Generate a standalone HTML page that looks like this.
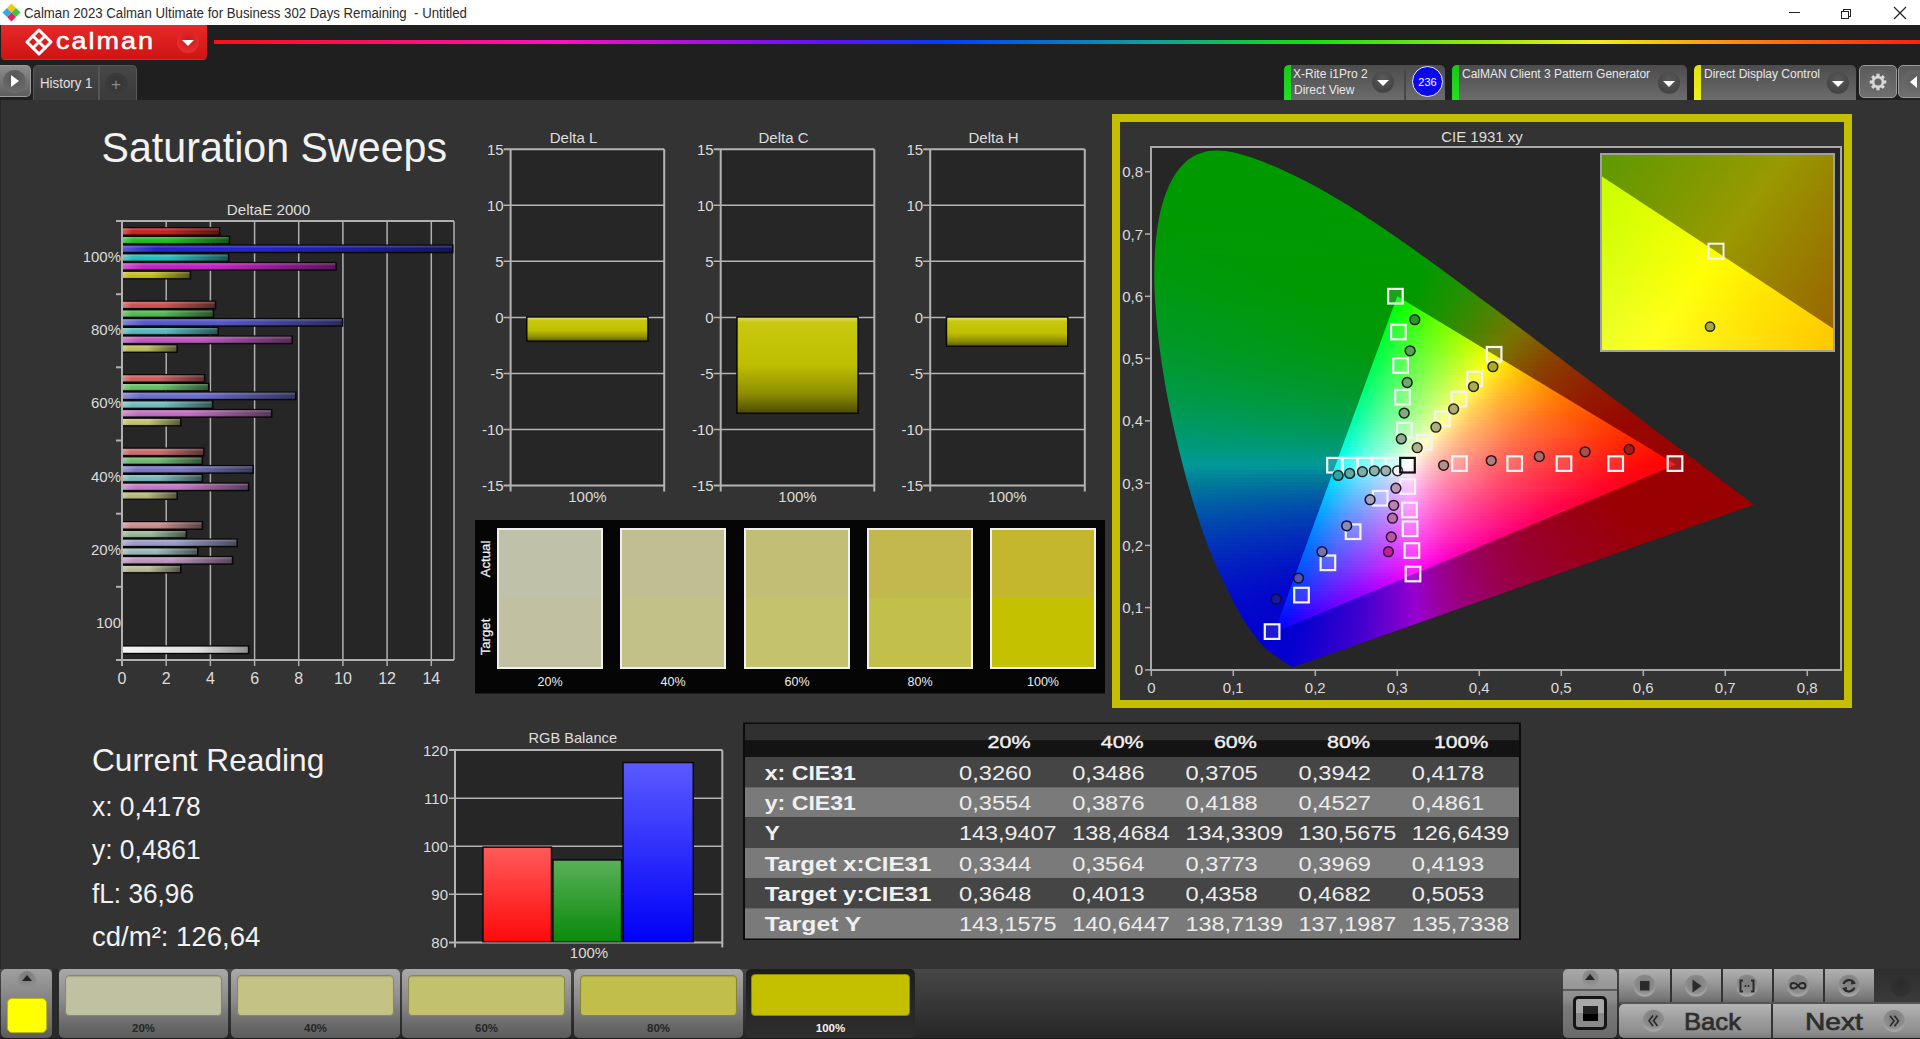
<!DOCTYPE html>
<html><head><meta charset="utf-8">
<style>
*{box-sizing:border-box}
html,body{margin:0;padding:0}
body{width:1920px;height:1039px;overflow:hidden;position:relative;background:#333333;font-family:"Liberation Sans",sans-serif;color:#e6e6e6}
.a{position:absolute}
.nw{white-space:nowrap}
#titlebar{left:0;top:0;width:1920px;height:25px;background:#fff;color:#2b2b2b;font-size:14px}
#hdr{left:0;top:25px;width:1920px;height:75px;background:#1f1f1f}
.dev{top:65px;height:35px;border-radius:5px 5px 0 0;background:linear-gradient(#4c4c4c,#6c6c6c);overflow:hidden;font-size:12px;color:#e8e8e8}
.dev .st{left:0;top:0;width:7px;height:35px;border-radius:4px 0 0 0}
.dd{width:22px;height:22px;border-radius:50%;background:radial-gradient(circle at 50% 35%,#5a5a5a,#444 70%,#555)}
.dd:after{content:"";position:absolute;left:5px;top:9px;border-left:6px solid transparent;border-right:6px solid transparent;border-top:6px solid #fff}
</style></head><body>
<div id="titlebar" class="a">
  <svg class="a" style="left:1px;top:2px" width="22" height="22" viewBox="0 0 22 22">
    <polygon points="10.5,1.5 15,6 10.5,10.5 6,6" fill="#f3c419"/>
    <polygon points="15,6 19.5,10.5 15,15 10.5,10.5" fill="#3fc43a"/>
    <polygon points="10.5,10.5 15,15 10.5,19.5 6,15" fill="#e0245a"/>
    <polygon points="6,6 10.5,10.5 6,15 1.5,10.5" fill="#35a8e0"/>
  </svg>
  <div class="a nw" style="left:23.5px;top:5px;transform:scaleX(0.944);transform-origin:0 0">Calman 2023 Calman Ultimate for Business 302 Days Remaining&nbsp; - Untitled</div>
  <div class="a" style="left:1789px;top:12px;width:11px;height:1px;background:#222"></div>
  <div class="a" style="left:1843px;top:9px;width:8px;height:8px;border:1px solid #222;background:#fff"></div>
  <div class="a" style="left:1841px;top:11px;width:8px;height:8px;border:1px solid #222;background:#fff"></div>
  <svg class="a" style="left:1893px;top:6px" width="14" height="14"><path d="M1,1L13,13M13,1L1,13" stroke="#222" stroke-width="1.2"/></svg>
</div>
<div id="hdr" class="a">
  <div class="a" style="left:1px;top:0;width:206px;height:34px;border-radius:0 0 4px 4px;background:linear-gradient(#e62a2a,#d81c1c 60%,#d01414);box-shadow:0 1px 0 #a04040"></div>
  <svg class="a" style="left:24px;top:2px" width="30" height="30" viewBox="0 0 30 30">
    <g fill="none" stroke="#fff" stroke-width="3" stroke-linejoin="round" stroke-linecap="round">
      <path d="M15,3 L27,15 L15,27 L3,15 Z"/>
      <path d="M9,9 L21,21 M21,9 L9,21"/>
    </g>
  </svg>
  <div class="a nw" style="left:56px;top:-1px;font-size:27px;color:#fff;letter-spacing:2px;-webkit-text-stroke:0.6px #fff;transform:scaleY(0.9);transform-origin:0 100%">calman</div>
  <div class="a" style="left:177px;top:6px;width:22px;height:22px;border-radius:50%;background:radial-gradient(circle at 50% 40%,#d01818,#e83030 80%,#c82020)"></div>
  <div class="a" style="left:182px;top:15px;border-left:6px solid transparent;border-right:6px solid transparent;border-top:6px solid #fff"></div>
  <div class="a" style="left:214px;top:15px;width:1706px;height:4px;background:linear-gradient(90deg,#ff1010 0%,#ff10c0 20%,#6010ff 36%,#0040ff 43%,#10a0a0 55%,#10e010 64%,#f0f010 81%,#ff8010 90%,#ff2010 100%)"></div>
  <!-- play btn -->
  <div class="a" style="left:0;top:40px;width:31px;height:32px;border-radius:0 5px 5px 0;background:linear-gradient(#8c8c8c,#5e5e5e);border:1px solid #9a9a9a;border-left:none"></div>
  <div class="a" style="left:3px;top:45px;width:23px;height:23px;border-radius:50%;background:radial-gradient(circle at 50% 30%,#555,#6a6a6a 75%,#808080)"></div>
  <div class="a" style="left:11px;top:50px;border-top:6px solid transparent;border-bottom:6px solid transparent;border-left:8px solid #fff"></div>
  <!-- history tab -->
  <div class="a" style="left:33px;top:40px;width:104px;height:35px;border-radius:5px 5px 0 0;background:linear-gradient(#474747,#3a3a3a);border:1px solid #585858;border-bottom:none"></div>
  <div class="a" style="left:98px;top:41px;width:2px;height:34px;background:#555"></div>
  <div class="a nw" style="left:40px;top:50px;font-size:14px;color:#e0e0e0;transform:scaleX(0.95);transform-origin:0 0">History 1</div>
  <div class="a" style="left:105px;top:48px;width:23px;height:23px;border-radius:50%;background:radial-gradient(circle at 50% 40%,#353535,#3c3c3c 70%,#444)"></div>
  <div class="a nw" style="left:111px;top:50px;font-size:17px;color:#888">+</div>
  <!-- devices -->
  <div class="a dev" style="left:1284px;top:40px;width:161px">
    <div class="a st" style="background:linear-gradient(#18c818,#22e022)"></div>
    <div class="a nw" style="left:9px;top:2px">X-Rite i1Pro 2</div>
    <div class="a nw" style="left:10px;top:18px">Direct View</div>
    <div class="a dd" style="left:88px;top:6px"></div>
    <div class="a" style="left:120px;top:4px;width:2px;height:31px;background:#474747"></div>
  </div>
  <div class="a" style="left:1412px;top:41px;width:31px;height:31px;border-radius:50%;background:#0a0ae8;border:1.5px solid #e8e8ff"></div>
  <div class="a nw" style="left:1412px;top:51px;width:31px;text-align:center;font-size:11px;color:#fff">236</div>
  <div class="a dev" style="left:1452px;top:40px;width:235px">
    <div class="a st" style="background:linear-gradient(#18c818,#22e022)"></div>
    <div class="a nw" style="left:10px;top:2px">CalMAN Client 3 Pattern Generator</div>
    <div class="a dd" style="left:206px;top:7px"></div>
  </div>
  <div class="a dev" style="left:1694px;top:40px;width:162px">
    <div class="a st" style="background:linear-gradient(#e0e010,#f0f020)"></div>
    <div class="a nw" style="left:10px;top:2px">Direct Display Control</div>
    <div class="a dd" style="left:133px;top:7px"></div>
  </div>
  <div class="a" style="left:1859px;top:40px;width:38px;height:33px;border-radius:5px;background:linear-gradient(#5a5a5a,#707070);border:1px solid #9a9a9a"></div>
  <div class="a" style="left:1866px;top:45px;width:24px;height:24px;border-radius:50%;background:radial-gradient(circle at 50% 35%,#5c5c5c,#6a6a6a 70%,#7a7a7a)"></div>
  <svg class="a" style="left:1868px;top:47px" width="20" height="20" viewBox="0 0 20 20">
    <g transform="translate(10,10)" fill="#d8d8d8">
      <circle r="6.2"/>
      <rect x="-1.6" y="-8.3" width="3.2" height="16.6"/>
      <rect x="-1.6" y="-8.3" width="3.2" height="16.6" transform="rotate(45)"/>
      <rect x="-1.6" y="-8.3" width="3.2" height="16.6" transform="rotate(90)"/>
      <rect x="-1.6" y="-8.3" width="3.2" height="16.6" transform="rotate(135)"/>
      <circle r="3.6" fill="#646464"/>
    </g>
  </svg>
  <div class="a" style="left:1898px;top:40px;width:30px;height:33px;border-radius:5px;background:linear-gradient(#5a5a5a,#707070);border:1px solid #9a9a9a"></div>
  <div class="a" style="left:1903px;top:45px;width:24px;height:24px;border-radius:50%;background:radial-gradient(circle at 50% 35%,#5c5c5c,#6a6a6a 70%,#7a7a7a)"></div>
  <div class="a" style="left:1910px;top:51px;border-top:6px solid transparent;border-bottom:6px solid transparent;border-right:7px solid #fff"></div>
</div>
<svg class="a" style="left:0;top:0" width="1920" height="1039" viewBox="0 0 1920 1039" font-family="Liberation Sans, sans-serif">
<defs>
<linearGradient id="bg1" x1="0" y1="0" x2="1" y2="0"><stop offset="0" stop-color="#da5656"/><stop offset="0.1" stop-color="#cd1e1e"/><stop offset="0.45" stop-color="#cd1e1e"/><stop offset="1" stop-color="#5c0e0e"/></linearGradient>
<linearGradient id="bg2" x1="0" y1="0" x2="1" y2="0"><stop offset="0" stop-color="#56ce56"/><stop offset="0.1" stop-color="#1ebe1e"/><stop offset="0.45" stop-color="#1ebe1e"/><stop offset="1" stop-color="#0e560e"/></linearGradient>
<linearGradient id="bg3" x1="0" y1="0" x2="1" y2="0"><stop offset="0" stop-color="#5656d6"/><stop offset="0.1" stop-color="#1e1ec8"/><stop offset="0.45" stop-color="#1e1ec8"/><stop offset="1" stop-color="#0e0e5a"/></linearGradient>
<linearGradient id="bg4" x1="0" y1="0" x2="1" y2="0"><stop offset="0" stop-color="#56cece"/><stop offset="0.1" stop-color="#1ebebe"/><stop offset="0.45" stop-color="#1ebebe"/><stop offset="1" stop-color="#0e5656"/></linearGradient>
<linearGradient id="bg5" x1="0" y1="0" x2="1" y2="0"><stop offset="0" stop-color="#d256d2"/><stop offset="0.1" stop-color="#c31ec3"/><stop offset="0.45" stop-color="#c31ec3"/><stop offset="1" stop-color="#580e58"/></linearGradient>
<linearGradient id="bg6" x1="0" y1="0" x2="1" y2="0"><stop offset="0" stop-color="#d2ce56"/><stop offset="0.1" stop-color="#c3be1e"/><stop offset="0.45" stop-color="#c3be1e"/><stop offset="1" stop-color="#58560e"/></linearGradient>
<linearGradient id="bg7" x1="0" y1="0" x2="1" y2="0"><stop offset="0" stop-color="#da7c7c"/><stop offset="0.1" stop-color="#cd5050"/><stop offset="0.45" stop-color="#cd5050"/><stop offset="1" stop-color="#5c2424"/></linearGradient>
<linearGradient id="bg8" x1="0" y1="0" x2="1" y2="0"><stop offset="0" stop-color="#7cca7c"/><stop offset="0.1" stop-color="#50b950"/><stop offset="0.45" stop-color="#50b950"/><stop offset="1" stop-color="#245324"/></linearGradient>
<linearGradient id="bg9" x1="0" y1="0" x2="1" y2="0"><stop offset="0" stop-color="#8080d6"/><stop offset="0.1" stop-color="#5555c8"/><stop offset="0.45" stop-color="#5555c8"/><stop offset="1" stop-color="#26265a"/></linearGradient>
<linearGradient id="bg10" x1="0" y1="0" x2="1" y2="0"><stop offset="0" stop-color="#80caca"/><stop offset="0.1" stop-color="#55b9b9"/><stop offset="0.45" stop-color="#55b9b9"/><stop offset="1" stop-color="#265353"/></linearGradient>
<linearGradient id="bg11" x1="0" y1="0" x2="1" y2="0"><stop offset="0" stop-color="#ce80ce"/><stop offset="0.1" stop-color="#be55be"/><stop offset="0.45" stop-color="#be55be"/><stop offset="1" stop-color="#562656"/></linearGradient>
<linearGradient id="bg12" x1="0" y1="0" x2="1" y2="0"><stop offset="0" stop-color="#cece83"/><stop offset="0.1" stop-color="#bebe5a"/><stop offset="0.45" stop-color="#bebe5a"/><stop offset="1" stop-color="#565628"/></linearGradient>
<linearGradient id="bg13" x1="0" y1="0" x2="1" y2="0"><stop offset="0" stop-color="#da8787"/><stop offset="0.1" stop-color="#cd5f5f"/><stop offset="0.45" stop-color="#cd5f5f"/><stop offset="1" stop-color="#5c2b2b"/></linearGradient>
<linearGradient id="bg14" x1="0" y1="0" x2="1" y2="0"><stop offset="0" stop-color="#8bce8b"/><stop offset="0.1" stop-color="#64be64"/><stop offset="0.45" stop-color="#64be64"/><stop offset="1" stop-color="#2d562d"/></linearGradient>
<linearGradient id="bg15" x1="0" y1="0" x2="1" y2="0"><stop offset="0" stop-color="#8e8eda"/><stop offset="0.1" stop-color="#6969cd"/><stop offset="0.45" stop-color="#6969cd"/><stop offset="1" stop-color="#2f2f5c"/></linearGradient>
<linearGradient id="bg16" x1="0" y1="0" x2="1" y2="0"><stop offset="0" stop-color="#92cece"/><stop offset="0.1" stop-color="#6ebebe"/><stop offset="0.45" stop-color="#6ebebe"/><stop offset="1" stop-color="#325656"/></linearGradient>
<linearGradient id="bg17" x1="0" y1="0" x2="1" y2="0"><stop offset="0" stop-color="#d292d2"/><stop offset="0.1" stop-color="#c36ec3"/><stop offset="0.45" stop-color="#c36ec3"/><stop offset="1" stop-color="#583258"/></linearGradient>
<linearGradient id="bg18" x1="0" y1="0" x2="1" y2="0"><stop offset="0" stop-color="#d2d292"/><stop offset="0.1" stop-color="#c3c36e"/><stop offset="0.45" stop-color="#c3c36e"/><stop offset="1" stop-color="#585832"/></linearGradient>
<linearGradient id="bg19" x1="0" y1="0" x2="1" y2="0"><stop offset="0" stop-color="#da8e8e"/><stop offset="0.1" stop-color="#cd6969"/><stop offset="0.45" stop-color="#cd6969"/><stop offset="1" stop-color="#5c2f2f"/></linearGradient>
<linearGradient id="bg20" x1="0" y1="0" x2="1" y2="0"><stop offset="0" stop-color="#92ca92"/><stop offset="0.1" stop-color="#6eb96e"/><stop offset="0.45" stop-color="#6eb96e"/><stop offset="1" stop-color="#325332"/></linearGradient>
<linearGradient id="bg21" x1="0" y1="0" x2="1" y2="0"><stop offset="0" stop-color="#9a9ad6"/><stop offset="0.1" stop-color="#7878c8"/><stop offset="0.45" stop-color="#7878c8"/><stop offset="1" stop-color="#36365a"/></linearGradient>
<linearGradient id="bg22" x1="0" y1="0" x2="1" y2="0"><stop offset="0" stop-color="#9acaca"/><stop offset="0.1" stop-color="#78b9b9"/><stop offset="0.45" stop-color="#78b9b9"/><stop offset="1" stop-color="#365353"/></linearGradient>
<linearGradient id="bg23" x1="0" y1="0" x2="1" y2="0"><stop offset="0" stop-color="#d29ad2"/><stop offset="0.1" stop-color="#c378c3"/><stop offset="0.45" stop-color="#c378c3"/><stop offset="1" stop-color="#583658"/></linearGradient>
<linearGradient id="bg24" x1="0" y1="0" x2="1" y2="0"><stop offset="0" stop-color="#caca9a"/><stop offset="0.1" stop-color="#b9b978"/><stop offset="0.45" stop-color="#b9b978"/><stop offset="1" stop-color="#535336"/></linearGradient>
<linearGradient id="bg25" x1="0" y1="0" x2="1" y2="0"><stop offset="0" stop-color="#daa9a9"/><stop offset="0.1" stop-color="#cd8c8c"/><stop offset="0.45" stop-color="#cd8c8c"/><stop offset="1" stop-color="#5c3f3f"/></linearGradient>
<linearGradient id="bg26" x1="0" y1="0" x2="1" y2="0"><stop offset="0" stop-color="#b0cab0"/><stop offset="0.1" stop-color="#96b996"/><stop offset="0.45" stop-color="#96b996"/><stop offset="1" stop-color="#445344"/></linearGradient>
<linearGradient id="bg27" x1="0" y1="0" x2="1" y2="0"><stop offset="0" stop-color="#b4b4d6"/><stop offset="0.1" stop-color="#9b9bc8"/><stop offset="0.45" stop-color="#9b9bc8"/><stop offset="1" stop-color="#46465a"/></linearGradient>
<linearGradient id="bg28" x1="0" y1="0" x2="1" y2="0"><stop offset="0" stop-color="#b4caca"/><stop offset="0.1" stop-color="#9bb9b9"/><stop offset="0.45" stop-color="#9bb9b9"/><stop offset="1" stop-color="#465353"/></linearGradient>
<linearGradient id="bg29" x1="0" y1="0" x2="1" y2="0"><stop offset="0" stop-color="#ceb0ce"/><stop offset="0.1" stop-color="#be96be"/><stop offset="0.45" stop-color="#be96be"/><stop offset="1" stop-color="#564456"/></linearGradient>
<linearGradient id="bg30" x1="0" y1="0" x2="1" y2="0"><stop offset="0" stop-color="#cacab0"/><stop offset="0.1" stop-color="#b9b996"/><stop offset="0.45" stop-color="#b9b996"/><stop offset="1" stop-color="#535344"/></linearGradient>
<linearGradient id="bgw" x1="0" y1="0" x2="1" y2="0"><stop offset="0" stop-color="#f4f4f4"/><stop offset="0.6" stop-color="#e0e0e0"/><stop offset="1" stop-color="#909090"/></linearGradient>
<linearGradient id="shine" x1="0" y1="0" x2="0" y2="1"><stop offset="0" stop-color="#fff" stop-opacity="0.25"/><stop offset="0.5" stop-color="#fff" stop-opacity="0"/><stop offset="1" stop-color="#000" stop-opacity="0.15"/></linearGradient>
<linearGradient id="ybar" x1="0" y1="0" x2="0" y2="1"><stop offset="0" stop-color="#e4e480"/><stop offset="0.12" stop-color="#c8c810"/><stop offset="0.55" stop-color="#c0c000"/><stop offset="0.85" stop-color="#8c8c00"/><stop offset="1" stop-color="#606000"/></linearGradient>
<linearGradient id="ybarC" x1="0" y1="0" x2="0" y2="1"><stop offset="0" stop-color="#d8d870"/><stop offset="0.05" stop-color="#c8c810"/><stop offset="0.5" stop-color="#bebe00"/><stop offset="0.8" stop-color="#8e8e00"/><stop offset="1" stop-color="#4e4e00"/></linearGradient>
<linearGradient id="rbar" x1="0" y1="0" x2="0" y2="1"><stop offset="0" stop-color="#ff5a5a"/><stop offset="1" stop-color="#ff0a0a"/></linearGradient>
<linearGradient id="gbar" x1="0" y1="0" x2="0" y2="1"><stop offset="0" stop-color="#58b058"/><stop offset="1" stop-color="#0a8a0a"/></linearGradient>
<linearGradient id="bbar" x1="0" y1="0" x2="0" y2="1"><stop offset="0" stop-color="#5a5aff"/><stop offset="1" stop-color="#0000f8"/></linearGradient>
</defs>
<text x="101.5" y="161.5" font-size="42.5" fill="#f2f2f2" text-anchor="start" textLength="345.5" lengthAdjust="spacingAndGlyphs" >Saturation Sweeps</text>
<rect x="122" y="221" width="332" height="439" fill="#262626"/>
<line x1="166.2" y1="221" x2="166.2" y2="666" stroke="#b0b0b0" stroke-width="1.5"/>
<line x1="210.4" y1="221" x2="210.4" y2="666" stroke="#b0b0b0" stroke-width="1.5"/>
<line x1="254.6" y1="221" x2="254.6" y2="666" stroke="#b0b0b0" stroke-width="1.5"/>
<line x1="298.7" y1="221" x2="298.7" y2="666" stroke="#b0b0b0" stroke-width="1.5"/>
<line x1="342.9" y1="221" x2="342.9" y2="666" stroke="#b0b0b0" stroke-width="1.5"/>
<line x1="387.1" y1="221" x2="387.1" y2="666" stroke="#b0b0b0" stroke-width="1.5"/>
<line x1="431.3" y1="221" x2="431.3" y2="666" stroke="#b0b0b0" stroke-width="1.5"/>
<line x1="122" y1="666" x2="122" y2="221" stroke="#b0b0b0" stroke-width="2"/>
<line x1="116" y1="221" x2="454" y2="221" stroke="#b0b0b0" stroke-width="2"/>
<line x1="454" y1="221" x2="454" y2="660" stroke="#b0b0b0" stroke-width="1.5"/>
<line x1="116" y1="660" x2="454" y2="660" stroke="#b0b0b0" stroke-width="2"/>
<line x1="116" y1="294.2" x2="122" y2="294.2" stroke="#b0b0b0" stroke-width="2"/>
<line x1="116" y1="367.3" x2="122" y2="367.3" stroke="#b0b0b0" stroke-width="2"/>
<line x1="116" y1="440.5" x2="122" y2="440.5" stroke="#b0b0b0" stroke-width="2"/>
<line x1="116" y1="513.7" x2="122" y2="513.7" stroke="#b0b0b0" stroke-width="2"/>
<line x1="116" y1="586.8" x2="122" y2="586.8" stroke="#b0b0b0" stroke-width="2"/>
<text x="268.5" y="215.3" font-size="15" fill="#dedede" text-anchor="middle" textLength="83.5" lengthAdjust="spacingAndGlyphs" >DeltaE 2000</text>
<text x="121.0" y="262.1" font-size="15" fill="#dcdcdc" text-anchor="end" >100%</text>
<text x="121.0" y="335.3" font-size="15" fill="#dcdcdc" text-anchor="end" >80%</text>
<text x="121.0" y="408.4" font-size="15" fill="#dcdcdc" text-anchor="end" >60%</text>
<text x="121.0" y="481.6" font-size="15" fill="#dcdcdc" text-anchor="end" >40%</text>
<text x="121.0" y="554.8" font-size="15" fill="#dcdcdc" text-anchor="end" >20%</text>
<text x="121.0" y="627.9" font-size="15" fill="#dcdcdc" text-anchor="end" >100</text>
<text x="122.0" y="684.0" font-size="16" fill="#dcdcdc" text-anchor="middle" >0</text>
<text x="166.2" y="684.0" font-size="16" fill="#dcdcdc" text-anchor="middle" >2</text>
<text x="210.4" y="684.0" font-size="16" fill="#dcdcdc" text-anchor="middle" >4</text>
<text x="254.6" y="684.0" font-size="16" fill="#dcdcdc" text-anchor="middle" >6</text>
<text x="298.7" y="684.0" font-size="16" fill="#dcdcdc" text-anchor="middle" >8</text>
<text x="342.9" y="684.0" font-size="16" fill="#dcdcdc" text-anchor="middle" >10</text>
<text x="387.1" y="684.0" font-size="16" fill="#dcdcdc" text-anchor="middle" >12</text>
<text x="431.3" y="684.0" font-size="16" fill="#dcdcdc" text-anchor="middle" >14</text>
<rect x="123" y="227.0" width="97.5" height="8.9" fill="#080808"/>
<rect x="123" y="228.3" width="95.9" height="6.2" fill="url(#bg1)"/>
<rect x="123" y="228.3" width="95.9" height="6.2" fill="url(#shine)"/>
<rect x="123" y="235.7" width="107.3" height="8.9" fill="#080808"/>
<rect x="123" y="237.0" width="105.7" height="6.2" fill="url(#bg2)"/>
<rect x="123" y="237.0" width="105.7" height="6.2" fill="url(#shine)"/>
<rect x="123" y="244.4" width="330.5" height="8.9" fill="#080808"/>
<rect x="123" y="245.7" width="328.9" height="6.2" fill="url(#bg3)"/>
<rect x="123" y="245.7" width="328.9" height="6.2" fill="url(#shine)"/>
<rect x="123" y="253.2" width="106.4" height="8.9" fill="#080808"/>
<rect x="123" y="254.5" width="104.8" height="6.2" fill="url(#bg4)"/>
<rect x="123" y="254.5" width="104.8" height="6.2" fill="url(#shine)"/>
<rect x="123" y="261.9" width="213.9" height="8.9" fill="#080808"/>
<rect x="123" y="263.2" width="212.3" height="6.2" fill="url(#bg5)"/>
<rect x="123" y="263.2" width="212.3" height="6.2" fill="url(#shine)"/>
<rect x="123" y="270.6" width="68.2" height="8.9" fill="#080808"/>
<rect x="123" y="271.9" width="66.6" height="6.2" fill="url(#bg6)"/>
<rect x="123" y="271.9" width="66.6" height="6.2" fill="url(#shine)"/>
<rect x="123" y="300.5" width="93.3" height="8.9" fill="#080808"/>
<rect x="123" y="301.8" width="91.7" height="6.2" fill="url(#bg7)"/>
<rect x="123" y="301.8" width="91.7" height="6.2" fill="url(#shine)"/>
<rect x="123" y="309.2" width="91.3" height="8.9" fill="#080808"/>
<rect x="123" y="310.5" width="89.7" height="6.2" fill="url(#bg8)"/>
<rect x="123" y="310.5" width="89.7" height="6.2" fill="url(#shine)"/>
<rect x="123" y="317.9" width="220.3" height="8.9" fill="#080808"/>
<rect x="123" y="319.2" width="218.7" height="6.2" fill="url(#bg9)"/>
<rect x="123" y="319.2" width="218.7" height="6.2" fill="url(#shine)"/>
<rect x="123" y="326.7" width="96.0" height="8.9" fill="#080808"/>
<rect x="123" y="328.0" width="94.4" height="6.2" fill="url(#bg10)"/>
<rect x="123" y="328.0" width="94.4" height="6.2" fill="url(#shine)"/>
<rect x="123" y="335.4" width="170.0" height="8.9" fill="#080808"/>
<rect x="123" y="336.7" width="168.4" height="6.2" fill="url(#bg11)"/>
<rect x="123" y="336.7" width="168.4" height="6.2" fill="url(#shine)"/>
<rect x="123" y="344.1" width="55.0" height="8.9" fill="#080808"/>
<rect x="123" y="345.4" width="53.4" height="6.2" fill="url(#bg12)"/>
<rect x="123" y="345.4" width="53.4" height="6.2" fill="url(#shine)"/>
<rect x="123" y="374.0" width="82.4" height="8.9" fill="#080808"/>
<rect x="123" y="375.3" width="80.8" height="6.2" fill="url(#bg13)"/>
<rect x="123" y="375.3" width="80.8" height="6.2" fill="url(#shine)"/>
<rect x="123" y="382.7" width="86.5" height="8.9" fill="#080808"/>
<rect x="123" y="384.0" width="84.9" height="6.2" fill="url(#bg14)"/>
<rect x="123" y="384.0" width="84.9" height="6.2" fill="url(#shine)"/>
<rect x="123" y="391.4" width="173.6" height="8.9" fill="#080808"/>
<rect x="123" y="392.7" width="172.0" height="6.2" fill="url(#bg15)"/>
<rect x="123" y="392.7" width="172.0" height="6.2" fill="url(#shine)"/>
<rect x="123" y="400.2" width="90.4" height="8.9" fill="#080808"/>
<rect x="123" y="401.5" width="88.8" height="6.2" fill="url(#bg16)"/>
<rect x="123" y="401.5" width="88.8" height="6.2" fill="url(#shine)"/>
<rect x="123" y="408.9" width="149.5" height="8.9" fill="#080808"/>
<rect x="123" y="410.2" width="147.9" height="6.2" fill="url(#bg17)"/>
<rect x="123" y="410.2" width="147.9" height="6.2" fill="url(#shine)"/>
<rect x="123" y="417.6" width="58.6" height="8.9" fill="#080808"/>
<rect x="123" y="418.9" width="57.0" height="6.2" fill="url(#bg18)"/>
<rect x="123" y="418.9" width="57.0" height="6.2" fill="url(#shine)"/>
<rect x="123" y="447.5" width="81.7" height="8.9" fill="#080808"/>
<rect x="123" y="448.8" width="80.1" height="6.2" fill="url(#bg19)"/>
<rect x="123" y="448.8" width="80.1" height="6.2" fill="url(#shine)"/>
<rect x="123" y="456.2" width="80.2" height="8.9" fill="#080808"/>
<rect x="123" y="457.5" width="78.6" height="6.2" fill="url(#bg20)"/>
<rect x="123" y="457.5" width="78.6" height="6.2" fill="url(#shine)"/>
<rect x="123" y="464.9" width="131.0" height="8.9" fill="#080808"/>
<rect x="123" y="466.2" width="129.4" height="6.2" fill="url(#bg21)"/>
<rect x="123" y="466.2" width="129.4" height="6.2" fill="url(#shine)"/>
<rect x="123" y="473.7" width="80.2" height="8.9" fill="#080808"/>
<rect x="123" y="475.0" width="78.6" height="6.2" fill="url(#bg22)"/>
<rect x="123" y="475.0" width="78.6" height="6.2" fill="url(#shine)"/>
<rect x="123" y="482.4" width="126.4" height="8.9" fill="#080808"/>
<rect x="123" y="483.7" width="124.8" height="6.2" fill="url(#bg23)"/>
<rect x="123" y="483.7" width="124.8" height="6.2" fill="url(#shine)"/>
<rect x="123" y="491.1" width="55.0" height="8.9" fill="#080808"/>
<rect x="123" y="492.4" width="53.4" height="6.2" fill="url(#bg24)"/>
<rect x="123" y="492.4" width="53.4" height="6.2" fill="url(#shine)"/>
<rect x="123" y="521.0" width="80.2" height="8.9" fill="#080808"/>
<rect x="123" y="522.3" width="78.6" height="6.2" fill="url(#bg25)"/>
<rect x="123" y="522.3" width="78.6" height="6.2" fill="url(#shine)"/>
<rect x="123" y="529.7" width="64.2" height="8.9" fill="#080808"/>
<rect x="123" y="531.0" width="62.6" height="6.2" fill="url(#bg26)"/>
<rect x="123" y="531.0" width="62.6" height="6.2" fill="url(#shine)"/>
<rect x="123" y="538.4" width="115.0" height="8.9" fill="#080808"/>
<rect x="123" y="539.7" width="113.4" height="6.2" fill="url(#bg27)"/>
<rect x="123" y="539.7" width="113.4" height="6.2" fill="url(#shine)"/>
<rect x="123" y="547.2" width="75.6" height="8.9" fill="#080808"/>
<rect x="123" y="548.5" width="74.0" height="6.2" fill="url(#bg28)"/>
<rect x="123" y="548.5" width="74.0" height="6.2" fill="url(#shine)"/>
<rect x="123" y="555.9" width="110.4" height="8.9" fill="#080808"/>
<rect x="123" y="557.2" width="108.8" height="6.2" fill="url(#bg29)"/>
<rect x="123" y="557.2" width="108.8" height="6.2" fill="url(#shine)"/>
<rect x="123" y="564.6" width="58.6" height="8.9" fill="#080808"/>
<rect x="123" y="565.9" width="57.0" height="6.2" fill="url(#bg30)"/>
<rect x="123" y="565.9" width="57.0" height="6.2" fill="url(#shine)"/>
<rect x="123" y="645.3" width="126.4" height="8.9" fill="#080808"/>
<rect x="123" y="646.6" width="124.8" height="6.2" fill="url(#bgw)"/>
<rect x="510.6" y="149.3" width="153.60000000000002" height="336.09999999999997" fill="#262626"/>
<line x1="503.6" y1="149.3" x2="664.2" y2="149.3" stroke="#b4b4b4" stroke-width="2"/>
<text x="503.6" y="154.8" font-size="15" fill="#dcdcdc" text-anchor="end" >15</text>
<line x1="503.6" y1="205.3" x2="664.2" y2="205.3" stroke="#b4b4b4" stroke-width="1.5"/>
<text x="503.6" y="210.8" font-size="15" fill="#dcdcdc" text-anchor="end" >10</text>
<line x1="503.6" y1="261.3" x2="664.2" y2="261.3" stroke="#b4b4b4" stroke-width="1.5"/>
<text x="503.6" y="266.8" font-size="15" fill="#dcdcdc" text-anchor="end" >5</text>
<line x1="503.6" y1="317.4" x2="664.2" y2="317.4" stroke="#b4b4b4" stroke-width="1.5"/>
<text x="503.6" y="322.9" font-size="15" fill="#dcdcdc" text-anchor="end" >0</text>
<line x1="503.6" y1="373.4" x2="664.2" y2="373.4" stroke="#b4b4b4" stroke-width="1.5"/>
<text x="503.6" y="378.9" font-size="15" fill="#dcdcdc" text-anchor="end" >-5</text>
<line x1="503.6" y1="429.4" x2="664.2" y2="429.4" stroke="#b4b4b4" stroke-width="1.5"/>
<text x="503.6" y="434.9" font-size="15" fill="#dcdcdc" text-anchor="end" >-10</text>
<line x1="503.6" y1="485.4" x2="664.2" y2="485.4" stroke="#b4b4b4" stroke-width="2"/>
<text x="503.6" y="490.9" font-size="15" fill="#dcdcdc" text-anchor="end" >-15</text>
<line x1="510.6" y1="149.3" x2="510.6" y2="491.4" stroke="#b4b4b4" stroke-width="2"/>
<line x1="664.2" y1="149.3" x2="664.2" y2="491.4" stroke="#b4b4b4" stroke-width="2"/>
<text x="573.5" y="143.2" font-size="15" fill="#dedede" text-anchor="middle" >Delta L</text>
<text x="587.4" y="502.0" font-size="15" fill="#dcdcdc" text-anchor="middle" >100%</text>
<rect x="526.0" y="316.2" width="122.70000000000005" height="25.8" fill="#080808"/>
<rect x="527.5" y="317.7" width="119.70000000000005" height="22.8" fill="url(#ybar)"/>
<rect x="720.7" y="149.3" width="153.5999999999999" height="336.09999999999997" fill="#262626"/>
<line x1="713.7" y1="149.3" x2="874.3" y2="149.3" stroke="#b4b4b4" stroke-width="2"/>
<text x="713.7" y="154.8" font-size="15" fill="#dcdcdc" text-anchor="end" >15</text>
<line x1="713.7" y1="205.3" x2="874.3" y2="205.3" stroke="#b4b4b4" stroke-width="1.5"/>
<text x="713.7" y="210.8" font-size="15" fill="#dcdcdc" text-anchor="end" >10</text>
<line x1="713.7" y1="261.3" x2="874.3" y2="261.3" stroke="#b4b4b4" stroke-width="1.5"/>
<text x="713.7" y="266.8" font-size="15" fill="#dcdcdc" text-anchor="end" >5</text>
<line x1="713.7" y1="317.4" x2="874.3" y2="317.4" stroke="#b4b4b4" stroke-width="1.5"/>
<text x="713.7" y="322.9" font-size="15" fill="#dcdcdc" text-anchor="end" >0</text>
<line x1="713.7" y1="373.4" x2="874.3" y2="373.4" stroke="#b4b4b4" stroke-width="1.5"/>
<text x="713.7" y="378.9" font-size="15" fill="#dcdcdc" text-anchor="end" >-5</text>
<line x1="713.7" y1="429.4" x2="874.3" y2="429.4" stroke="#b4b4b4" stroke-width="1.5"/>
<text x="713.7" y="434.9" font-size="15" fill="#dcdcdc" text-anchor="end" >-10</text>
<line x1="713.7" y1="485.4" x2="874.3" y2="485.4" stroke="#b4b4b4" stroke-width="2"/>
<text x="713.7" y="490.9" font-size="15" fill="#dcdcdc" text-anchor="end" >-15</text>
<line x1="720.7" y1="149.3" x2="720.7" y2="491.4" stroke="#b4b4b4" stroke-width="2"/>
<line x1="874.3" y1="149.3" x2="874.3" y2="491.4" stroke="#b4b4b4" stroke-width="2"/>
<text x="783.5" y="143.2" font-size="15" fill="#dedede" text-anchor="middle" >Delta C</text>
<text x="797.5" y="502.0" font-size="15" fill="#dcdcdc" text-anchor="middle" >100%</text>
<rect x="736.2" y="316.2" width="122.59999999999991" height="97.8" fill="#080808"/>
<rect x="737.7" y="317.7" width="119.59999999999991" height="94.8" fill="url(#ybarC)"/>
<rect x="930.2" y="149.3" width="154.5999999999999" height="336.09999999999997" fill="#262626"/>
<line x1="923.2" y1="149.3" x2="1084.8" y2="149.3" stroke="#b4b4b4" stroke-width="2"/>
<text x="923.2" y="154.8" font-size="15" fill="#dcdcdc" text-anchor="end" >15</text>
<line x1="923.2" y1="205.3" x2="1084.8" y2="205.3" stroke="#b4b4b4" stroke-width="1.5"/>
<text x="923.2" y="210.8" font-size="15" fill="#dcdcdc" text-anchor="end" >10</text>
<line x1="923.2" y1="261.3" x2="1084.8" y2="261.3" stroke="#b4b4b4" stroke-width="1.5"/>
<text x="923.2" y="266.8" font-size="15" fill="#dcdcdc" text-anchor="end" >5</text>
<line x1="923.2" y1="317.4" x2="1084.8" y2="317.4" stroke="#b4b4b4" stroke-width="1.5"/>
<text x="923.2" y="322.9" font-size="15" fill="#dcdcdc" text-anchor="end" >0</text>
<line x1="923.2" y1="373.4" x2="1084.8" y2="373.4" stroke="#b4b4b4" stroke-width="1.5"/>
<text x="923.2" y="378.9" font-size="15" fill="#dcdcdc" text-anchor="end" >-5</text>
<line x1="923.2" y1="429.4" x2="1084.8" y2="429.4" stroke="#b4b4b4" stroke-width="1.5"/>
<text x="923.2" y="434.9" font-size="15" fill="#dcdcdc" text-anchor="end" >-10</text>
<line x1="923.2" y1="485.4" x2="1084.8" y2="485.4" stroke="#b4b4b4" stroke-width="2"/>
<text x="923.2" y="490.9" font-size="15" fill="#dcdcdc" text-anchor="end" >-15</text>
<line x1="930.2" y1="149.3" x2="930.2" y2="491.4" stroke="#b4b4b4" stroke-width="2"/>
<line x1="1084.8" y1="149.3" x2="1084.8" y2="491.4" stroke="#b4b4b4" stroke-width="2"/>
<text x="993.5" y="143.2" font-size="15" fill="#dedede" text-anchor="middle" >Delta H</text>
<text x="1007.5" y="502.0" font-size="15" fill="#dcdcdc" text-anchor="middle" >100%</text>
<rect x="945.7" y="316.2" width="122.79999999999995" height="30.8" fill="#080808"/>
<rect x="947.2" y="317.7" width="119.79999999999995" height="27.8" fill="url(#ybar)"/>
<rect x="475" y="520" width="630" height="173.5" fill="#050505"/>
<rect x="497" y="528" width="106" height="141" fill="#f0f0f0"/>
<rect x="499" y="530" width="102" height="68" fill="#bfc2a8"/>
<rect x="499" y="598" width="102" height="69" fill="#c1c1a1"/>
<text x="550.0" y="686.0" font-size="12.5" fill="#f0f0f0" text-anchor="middle" >20%</text>
<rect x="620" y="528" width="106" height="141" fill="#f0f0f0"/>
<rect x="622" y="530" width="102" height="68" fill="#c0bf91"/>
<rect x="622" y="598" width="102" height="69" fill="#c2c187"/>
<text x="673.0" y="686.0" font-size="12.5" fill="#f0f0f0" text-anchor="middle" >40%</text>
<rect x="744" y="528" width="106" height="141" fill="#f0f0f0"/>
<rect x="746" y="530" width="102" height="68" fill="#c2be76"/>
<rect x="746" y="598" width="102" height="69" fill="#c4c26c"/>
<text x="797.0" y="686.0" font-size="12.5" fill="#f0f0f0" text-anchor="middle" >60%</text>
<rect x="867" y="528" width="106" height="141" fill="#f0f0f0"/>
<rect x="869" y="530" width="102" height="68" fill="#c2b84e"/>
<rect x="869" y="598" width="102" height="69" fill="#c2c04a"/>
<text x="920.0" y="686.0" font-size="12.5" fill="#f0f0f0" text-anchor="middle" >80%</text>
<rect x="990" y="528" width="106" height="141" fill="#f0f0f0"/>
<rect x="992" y="530" width="102" height="68" fill="#c4b72d"/>
<rect x="992" y="598" width="102" height="69" fill="#c4c200"/>
<text x="1043.0" y="686.0" font-size="12.5" fill="#f0f0f0" text-anchor="middle" >100%</text>
<text transform="translate(489.8,559) rotate(-90)" font-size="13.2" fill="#f0f0f0" text-anchor="middle" stroke="#f0f0f0" stroke-width="0.25">Actual</text>
<text transform="translate(489.8,637) rotate(-90)" font-size="13.2" fill="#f0f0f0" text-anchor="middle" stroke="#f0f0f0" stroke-width="0.25">Target</text>
<text x="92.0" y="771.0" font-size="30.5" fill="#f2f2f2" text-anchor="start" textLength="232.3" lengthAdjust="spacingAndGlyphs" >Current Reading</text>
<text x="92.0" y="816.0" font-size="27" fill="#f2f2f2" text-anchor="start" textLength="108.6" lengthAdjust="spacingAndGlyphs" >x: 0,4178</text>
<text x="92.0" y="859.3" font-size="27" fill="#f2f2f2" text-anchor="start" textLength="108.6" lengthAdjust="spacingAndGlyphs" >y: 0,4861</text>
<text x="92.0" y="902.5" font-size="27" fill="#f2f2f2" text-anchor="start" textLength="102.0" lengthAdjust="spacingAndGlyphs" >fL: 36,96</text>
<text x="92.0" y="946.0" font-size="27" fill="#f2f2f2" text-anchor="start" textLength="168.3" lengthAdjust="spacingAndGlyphs" >cd/m²: 126,64</text>
<rect x="455" y="750.1" width="267.29999999999995" height="192.29999999999995" fill="#262626"/>
<line x1="449" y1="750.1" x2="722.3" y2="750.1" stroke="#b4b4b4" stroke-width="2"/>
<text x="448.0" y="755.6" font-size="15" fill="#dcdcdc" text-anchor="end" >120</text>
<line x1="449" y1="798.2" x2="722.3" y2="798.2" stroke="#b4b4b4" stroke-width="1.5"/>
<text x="448.0" y="803.7" font-size="15" fill="#dcdcdc" text-anchor="end" >110</text>
<line x1="449" y1="846.2" x2="722.3" y2="846.2" stroke="#b4b4b4" stroke-width="1.5"/>
<text x="448.0" y="851.8" font-size="15" fill="#dcdcdc" text-anchor="end" >100</text>
<line x1="449" y1="894.3" x2="722.3" y2="894.3" stroke="#b4b4b4" stroke-width="1.5"/>
<text x="448.0" y="899.8" font-size="15" fill="#dcdcdc" text-anchor="end" >90</text>
<line x1="449" y1="942.4" x2="722.3" y2="942.4" stroke="#b4b4b4" stroke-width="2"/>
<text x="448.0" y="947.9" font-size="15" fill="#dcdcdc" text-anchor="end" >80</text>
<line x1="455" y1="750.1" x2="455" y2="947.4" stroke="#b4b4b4" stroke-width="2"/>
<line x1="722.3" y1="750.1" x2="722.3" y2="947.4" stroke="#b4b4b4" stroke-width="2"/>
<text x="572.8" y="743.0" font-size="15" fill="#dedede" text-anchor="middle" textLength="88.5" lengthAdjust="spacingAndGlyphs" >RGB Balance</text>
<text x="589.0" y="958.0" font-size="15" fill="#dcdcdc" text-anchor="middle" >100%</text>
<rect x="482.2" y="846.4" width="70.0" height="96.0" fill="#0a0a0a"/>
<rect x="483.7" y="847.9" width="67.0" height="93.5" fill="url(#rbar)"/>
<rect x="552.2" y="859.2" width="70.1" height="83.2" fill="#0a0a0a"/>
<rect x="553.7" y="860.7" width="67.1" height="80.7" fill="url(#gbar)"/>
<rect x="622.3" y="761.8" width="71.7" height="180.6" fill="#0a0a0a"/>
<rect x="623.8" y="763.3" width="68.7" height="178.1" fill="url(#bbar)"/>
<rect x="743" y="722.5" width="778" height="217.5" fill="#0c0c0c"/>
<rect x="745" y="724" width="774" height="16.5" fill="#303030"/>
<rect x="745" y="740.5" width="774" height="16.5" fill="#131313"/>
<rect x="745" y="757.0" width="774" height="30.25" fill="#454545"/>
<text x="764.7" y="779.7" font-size="19.5" fill="#f0f0f0" text-anchor="start" font-weight="bold" textLength="91.3" lengthAdjust="spacingAndGlyphs" >x: CIE31</text>
<text x="959.0" y="779.7" font-size="19.5" fill="#ececec" text-anchor="start" textLength="72.4" lengthAdjust="spacingAndGlyphs" >0,3260</text>
<text x="1072.2" y="779.7" font-size="19.5" fill="#ececec" text-anchor="start" textLength="72.4" lengthAdjust="spacingAndGlyphs" >0,3486</text>
<text x="1185.4" y="779.7" font-size="19.5" fill="#ececec" text-anchor="start" textLength="72.4" lengthAdjust="spacingAndGlyphs" >0,3705</text>
<text x="1298.6" y="779.7" font-size="19.5" fill="#ececec" text-anchor="start" textLength="72.4" lengthAdjust="spacingAndGlyphs" >0,3942</text>
<text x="1411.8" y="779.7" font-size="19.5" fill="#ececec" text-anchor="start" textLength="72.4" lengthAdjust="spacingAndGlyphs" >0,4178</text>
<rect x="745" y="787.2" width="774" height="30.25" fill="#7a7a7a"/>
<text x="764.7" y="810.0" font-size="19.5" fill="#f0f0f0" text-anchor="start" font-weight="bold" textLength="91.3" lengthAdjust="spacingAndGlyphs" >y: CIE31</text>
<text x="959.0" y="810.0" font-size="19.5" fill="#ececec" text-anchor="start" textLength="72.4" lengthAdjust="spacingAndGlyphs" >0,3554</text>
<text x="1072.2" y="810.0" font-size="19.5" fill="#ececec" text-anchor="start" textLength="72.4" lengthAdjust="spacingAndGlyphs" >0,3876</text>
<text x="1185.4" y="810.0" font-size="19.5" fill="#ececec" text-anchor="start" textLength="72.4" lengthAdjust="spacingAndGlyphs" >0,4188</text>
<text x="1298.6" y="810.0" font-size="19.5" fill="#ececec" text-anchor="start" textLength="72.4" lengthAdjust="spacingAndGlyphs" >0,4527</text>
<text x="1411.8" y="810.0" font-size="19.5" fill="#ececec" text-anchor="start" textLength="72.4" lengthAdjust="spacingAndGlyphs" >0,4861</text>
<rect x="745" y="817.5" width="774" height="30.25" fill="#454545"/>
<text x="764.7" y="840.2" font-size="19.5" fill="#f0f0f0" text-anchor="start" font-weight="bold" textLength="15.0" lengthAdjust="spacingAndGlyphs" >Y</text>
<text x="959.0" y="840.2" font-size="19.5" fill="#ececec" text-anchor="start" textLength="97.6" lengthAdjust="spacingAndGlyphs" >143,9407</text>
<text x="1072.2" y="840.2" font-size="19.5" fill="#ececec" text-anchor="start" textLength="97.6" lengthAdjust="spacingAndGlyphs" >138,4684</text>
<text x="1185.4" y="840.2" font-size="19.5" fill="#ececec" text-anchor="start" textLength="97.6" lengthAdjust="spacingAndGlyphs" >134,3309</text>
<text x="1298.6" y="840.2" font-size="19.5" fill="#ececec" text-anchor="start" textLength="97.6" lengthAdjust="spacingAndGlyphs" >130,5675</text>
<text x="1411.8" y="840.2" font-size="19.5" fill="#ececec" text-anchor="start" textLength="97.6" lengthAdjust="spacingAndGlyphs" >126,6439</text>
<rect x="745" y="847.8" width="774" height="30.25" fill="#7a7a7a"/>
<text x="764.7" y="870.5" font-size="19.5" fill="#f0f0f0" text-anchor="start" font-weight="bold" textLength="166.6" lengthAdjust="spacingAndGlyphs" >Target x:CIE31</text>
<text x="959.0" y="870.5" font-size="19.5" fill="#ececec" text-anchor="start" textLength="72.4" lengthAdjust="spacingAndGlyphs" >0,3344</text>
<text x="1072.2" y="870.5" font-size="19.5" fill="#ececec" text-anchor="start" textLength="72.4" lengthAdjust="spacingAndGlyphs" >0,3564</text>
<text x="1185.4" y="870.5" font-size="19.5" fill="#ececec" text-anchor="start" textLength="72.4" lengthAdjust="spacingAndGlyphs" >0,3773</text>
<text x="1298.6" y="870.5" font-size="19.5" fill="#ececec" text-anchor="start" textLength="72.4" lengthAdjust="spacingAndGlyphs" >0,3969</text>
<text x="1411.8" y="870.5" font-size="19.5" fill="#ececec" text-anchor="start" textLength="72.4" lengthAdjust="spacingAndGlyphs" >0,4193</text>
<rect x="745" y="878.0" width="774" height="30.25" fill="#454545"/>
<text x="764.7" y="900.7" font-size="19.5" fill="#f0f0f0" text-anchor="start" font-weight="bold" textLength="166.6" lengthAdjust="spacingAndGlyphs" >Target y:CIE31</text>
<text x="959.0" y="900.7" font-size="19.5" fill="#ececec" text-anchor="start" textLength="72.4" lengthAdjust="spacingAndGlyphs" >0,3648</text>
<text x="1072.2" y="900.7" font-size="19.5" fill="#ececec" text-anchor="start" textLength="72.4" lengthAdjust="spacingAndGlyphs" >0,4013</text>
<text x="1185.4" y="900.7" font-size="19.5" fill="#ececec" text-anchor="start" textLength="72.4" lengthAdjust="spacingAndGlyphs" >0,4358</text>
<text x="1298.6" y="900.7" font-size="19.5" fill="#ececec" text-anchor="start" textLength="72.4" lengthAdjust="spacingAndGlyphs" >0,4682</text>
<text x="1411.8" y="900.7" font-size="19.5" fill="#ececec" text-anchor="start" textLength="72.4" lengthAdjust="spacingAndGlyphs" >0,5053</text>
<rect x="745" y="908.2" width="774" height="30.25" fill="#7a7a7a"/>
<text x="764.7" y="931.0" font-size="19.5" fill="#f0f0f0" text-anchor="start" font-weight="bold" textLength="96.7" lengthAdjust="spacingAndGlyphs" >Target Y</text>
<text x="959.0" y="931.0" font-size="19.5" fill="#ececec" text-anchor="start" textLength="97.6" lengthAdjust="spacingAndGlyphs" >143,1575</text>
<text x="1072.2" y="931.0" font-size="19.5" fill="#ececec" text-anchor="start" textLength="97.6" lengthAdjust="spacingAndGlyphs" >140,6447</text>
<text x="1185.4" y="931.0" font-size="19.5" fill="#ececec" text-anchor="start" textLength="97.6" lengthAdjust="spacingAndGlyphs" >138,7139</text>
<text x="1298.6" y="931.0" font-size="19.5" fill="#ececec" text-anchor="start" textLength="97.6" lengthAdjust="spacingAndGlyphs" >137,1987</text>
<text x="1411.8" y="931.0" font-size="19.5" fill="#ececec" text-anchor="start" textLength="97.6" lengthAdjust="spacingAndGlyphs" >135,7338</text>
<text x="1030.5" y="748.0" font-size="17" fill="#f0f0f0" text-anchor="end" textLength="43.0" lengthAdjust="spacingAndGlyphs" stroke="#f0f0f0" stroke-width="0.35">20%</text>
<text x="1143.7" y="748.0" font-size="17" fill="#f0f0f0" text-anchor="end" textLength="43.0" lengthAdjust="spacingAndGlyphs" stroke="#f0f0f0" stroke-width="0.35">40%</text>
<text x="1256.9" y="748.0" font-size="17" fill="#f0f0f0" text-anchor="end" textLength="43.0" lengthAdjust="spacingAndGlyphs" stroke="#f0f0f0" stroke-width="0.35">60%</text>
<text x="1370.1" y="748.0" font-size="17" fill="#f0f0f0" text-anchor="end" textLength="43.0" lengthAdjust="spacingAndGlyphs" stroke="#f0f0f0" stroke-width="0.35">80%</text>
<text x="1488.3" y="748.0" font-size="17" fill="#f0f0f0" text-anchor="end" textLength="54.3" lengthAdjust="spacingAndGlyphs" stroke="#f0f0f0" stroke-width="0.35">100%</text>
<rect x="1112" y="114" width="740" height="594" fill="#c4c000"/>
<rect x="1120" y="122" width="724" height="578" fill="#333333"/>
<rect x="1151" y="147" width="690" height="523" fill="#262626"/>
</svg>
<div class="a" style="left:0;top:0;width:1920px;height:1039px;clip-path:path('M1294.1 666.8 L1293.8 666.9 L1293.4 666.9 L1292.8 666.9 L1291.8 666.7 L1289.8 665.6 L1286.1 663.1 L1279.7 658.9 L1269.4 651.4 L1266.7 649.2 L1263.8 646.4 L1260.6 643.1 L1257.0 639.0 L1253.1 633.9 L1248.6 627.7 L1243.8 620.2 L1238.5 611.1 L1232.6 600.2 L1226.2 587.3 L1224.4 583.7 L1222.7 580.0 L1220.9 576.2 L1219.0 572.2 L1217.2 568.0 L1215.3 563.7 L1213.4 559.3 L1211.5 554.7 L1209.6 549.9 L1207.6 544.9 L1205.7 539.8 L1203.8 534.5 L1201.9 529.1 L1200.0 523.4 L1198.1 517.6 L1196.1 511.7 L1194.2 505.6 L1192.3 499.3 L1190.4 492.8 L1188.5 486.2 L1186.6 479.4 L1184.7 472.5 L1182.9 465.4 L1181.0 458.2 L1179.2 450.9 L1177.4 443.5 L1175.6 435.9 L1173.9 428.3 L1172.2 420.7 L1170.6 412.9 L1169.0 405.1 L1167.5 397.3 L1166.0 389.4 L1164.7 381.5 L1163.4 373.7 L1162.1 365.8 L1161.0 357.9 L1159.9 350.1 L1158.9 342.4 L1158.0 334.6 L1157.2 327.0 L1156.5 319.4 L1155.9 311.9 L1155.4 304.5 L1154.9 297.2 L1154.6 290.0 L1154.4 282.8 L1154.3 275.8 L1154.4 268.9 L1154.5 262.2 L1154.8 255.5 L1155.1 249.0 L1155.6 242.6 L1156.3 236.4 L1157.0 230.3 L1157.9 224.4 L1158.9 218.7 L1160.0 213.2 L1161.3 207.9 L1162.7 202.8 L1164.2 197.8 L1165.9 193.2 L1167.7 188.7 L1169.6 184.5 L1171.6 180.5 L1173.7 176.7 L1175.9 173.2 L1178.3 170.0 L1180.7 167.0 L1183.2 164.3 L1185.8 161.8 L1188.5 159.6 L1191.2 157.7 L1194.1 156.0 L1197.0 154.6 L1199.9 153.4 L1202.9 152.4 L1206.0 151.6 L1209.1 151.1 L1212.2 150.7 L1215.4 150.5 L1218.6 150.5 L1221.8 150.7 L1225.1 151.0 L1228.3 151.5 L1231.6 152.0 L1234.9 152.7 L1238.3 153.5 L1241.6 154.4 L1244.9 155.4 L1248.3 156.5 L1251.6 157.6 L1255.0 158.7 L1258.3 160.0 L1261.7 161.2 L1265.0 162.5 L1268.3 163.9 L1271.6 165.2 L1274.9 166.6 L1278.2 168.1 L1281.4 169.5 L1284.6 171.0 L1287.8 172.4 L1290.9 173.9 L1294.1 175.4 L1297.2 176.9 L1300.3 178.5 L1303.4 180.0 L1306.4 181.6 L1309.5 183.2 L1312.5 184.8 L1315.6 186.4 L1318.6 188.1 L1321.6 189.8 L1324.6 191.5 L1327.6 193.2 L1330.6 194.9 L1333.6 196.7 L1336.6 198.4 L1339.6 200.2 L1342.6 202.0 L1345.5 203.8 L1348.5 205.6 L1351.5 207.5 L1354.5 209.4 L1357.4 211.2 L1360.4 213.1 L1363.3 215.0 L1366.3 216.9 L1369.3 218.9 L1372.2 220.8 L1375.1 222.8 L1378.1 224.7 L1381.0 226.7 L1384.0 228.7 L1386.9 230.7 L1389.8 232.7 L1392.8 234.7 L1395.7 236.8 L1398.6 238.8 L1401.5 240.9 L1404.5 242.9 L1407.4 245.0 L1410.3 247.0 L1413.2 249.1 L1416.2 251.2 L1419.1 253.3 L1422.0 255.4 L1425.0 257.5 L1427.9 259.6 L1430.8 261.7 L1433.8 263.8 L1436.7 266.0 L1439.6 268.1 L1442.6 270.3 L1445.5 272.4 L1448.4 274.5 L1451.4 276.7 L1454.3 278.9 L1457.2 281.0 L1468.9 289.7 L1480.6 298.4 L1492.3 307.1 L1503.9 315.8 L1515.5 324.5 L1526.9 333.1 L1538.3 341.7 L1549.5 350.2 L1560.6 358.6 L1571.5 366.9 L1582.3 375.0 L1592.8 383.0 L1603.2 390.8 L1613.2 398.4 L1623.0 405.8 L1632.4 412.9 L1641.4 419.7 L1649.9 426.2 L1657.8 432.2 L1665.4 437.9 L1697.3 461.9 L1718.3 477.9 L1731.8 488.1 L1740.9 495.0 L1746.6 499.3 L1749.9 501.8 L1751.7 503.2 L1752.7 503.9 L1753.2 504.3 L1753.8 504.7 Z')">
<div class="a" style="left:1151px;top:146px;width:609px;height:4px;background:linear-gradient(90deg,#009900 0px,#029900 326px,#249100 390px,#787700 510px,#884300 608px)"></div>
<div class="a" style="left:1151px;top:150px;width:609px;height:4px;background:linear-gradient(90deg,#009900 0px,#029900 324px,#249100 388px,#777700 506px,#894200 608px)"></div>
<div class="a" style="left:1151px;top:154px;width:609px;height:4px;background:linear-gradient(90deg,#009900 0px,#029900 322px,#259000 386px,#777800 502px,#894000 608px)"></div>
<div class="a" style="left:1151px;top:158px;width:609px;height:4px;background:linear-gradient(90deg,#009900 0px,#029900 320px,#239100 382px,#777700 500px,#8a3f00 608px)"></div>
<div class="a" style="left:1151px;top:162px;width:609px;height:4px;background:linear-gradient(90deg,#009900 0px,#029900 318px,#239100 380px,#777700 496px,#8a3d00 608px)"></div>
<div class="a" style="left:1151px;top:166px;width:609px;height:4px;background:linear-gradient(90deg,#009900 0px,#029900 318px,#259000 380px,#787700 494px,#835600 548px,#8b3c00 608px)"></div>
<div class="a" style="left:1151px;top:170px;width:609px;height:4px;background:linear-gradient(90deg,#009900 0px,#029900 316px,#259000 378px,#777700 490px,#835500 546px,#8b3a00 608px)"></div>
<div class="a" style="left:1151px;top:174px;width:609px;height:4px;background:linear-gradient(90deg,#009900 0px,#029900 314px,#249100 374px,#787700 488px,#845400 544px,#8b3900 608px)"></div>
<div class="a" style="left:1151px;top:178px;width:609px;height:4px;background:linear-gradient(90deg,#009900 0px,#029900 312px,#249100 372px,#777700 484px,#845300 542px,#8c3700 608px)"></div>
<div class="a" style="left:1151px;top:182px;width:609px;height:4px;background:linear-gradient(90deg,#009900 0px,#029900 310px,#249100 370px,#777800 480px,#845200 540px,#8c3600 608px)"></div>
<div class="a" style="left:1151px;top:186px;width:609px;height:4px;background:linear-gradient(90deg,#009900 0px,#029900 308px,#239100 366px,#787700 478px,#845100 538px,#8c3400 608px)"></div>
<div class="a" style="left:1151px;top:190px;width:609px;height:4px;background:linear-gradient(90deg,#009900 0px,#029900 306px,#239100 364px,#777700 474px,#855000 536px,#8d3300 608px)"></div>
<div class="a" style="left:1151px;top:194px;width:609px;height:4px;background:linear-gradient(90deg,#009901 0px,#019900 304px,#229100 360px,#787700 472px,#854f00 534px,#8d3100 608px)"></div>
<div class="a" style="left:1151px;top:198px;width:609px;height:4px;background:linear-gradient(90deg,#009901 0px,#029900 304px,#259000 362px,#777700 468px,#854f00 532px,#8e3000 608px)"></div>
<div class="a" style="left:1151px;top:202px;width:609px;height:4px;background:linear-gradient(90deg,#009901 0px,#029900 302px,#239100 358px,#777800 464px,#854e00 530px,#8e2f00 608px)"></div>
<div class="a" style="left:1151px;top:206px;width:609px;height:4px;background:linear-gradient(90deg,#009901 0px,#029900 300px,#249100 356px,#787700 462px,#864d00 528px,#8e2d00 608px)"></div>
<div class="a" style="left:1151px;top:210px;width:609px;height:4px;background:linear-gradient(90deg,#009902 0px,#029900 298px,#249100 354px,#777700 458px,#864c00 526px,#8f2c00 608px)"></div>
<div class="a" style="left:1151px;top:214px;width:609px;height:4px;background:linear-gradient(90deg,#009902 0px,#029900 296px,#229100 350px,#787700 456px,#874a00 526px,#8f2a00 608px)"></div>
<div class="a" style="left:1151px;top:218px;width:609px;height:4px;background:linear-gradient(90deg,#009902 0px,#019900 294px,#229100 348px,#777700 452px,#864a00 522px,#8f2900 608px)"></div>
<div class="a" style="left:1151px;top:222px;width:609px;height:4px;background:linear-gradient(90deg,#009903 0px,#019900 292px,#219100 344px,#787600 450px,#874800 522px,#902800 608px)"></div>
<div class="a" style="left:1151px;top:226px;width:609px;height:4px;background:linear-gradient(90deg,#009903 0px,#029900 292px,#249100 346px,#777700 446px,#874800 518px,#902600 608px)"></div>
<div class="a" style="left:1151px;top:230px;width:609px;height:4px;background:linear-gradient(90deg,#009904 0px,#029900 290px,#249100 344px,#777700 442px,#874700 516px,#902500 608px)"></div>
<div class="a" style="left:1151px;top:234px;width:609px;height:4px;background:linear-gradient(90deg,#009905 0px,#029900 288px,#239100 340px,#787700 440px,#884600 514px,#912400 608px)"></div>
<div class="a" style="left:1151px;top:238px;width:609px;height:4px;background:linear-gradient(90deg,#009906 0px,#019900 286px,#239100 338px,#777700 436px,#884500 512px,#912300 608px)"></div>
<div class="a" style="left:1151px;top:242px;width:609px;height:4px;background:linear-gradient(90deg,#009907 0px,#019900 284px,#229100 334px,#787600 434px,#884400 510px,#912100 608px)"></div>
<div class="a" style="left:1151px;top:246px;width:609px;height:4px;background:linear-gradient(90deg,#009908 0px,#019900 282px,#229100 332px,#777700 430px,#884300 508px,#922000 608px)"></div>
<div class="a" style="left:1151px;top:250px;width:609px;height:4px;background:linear-gradient(90deg,#009909 0px,#019900 280px,#209200 328px,#787600 428px,#894200 506px,#921f00 608px)"></div>
<div class="a" style="left:1151px;top:254px;width:609px;height:4px;background:linear-gradient(90deg,#00990a 0px,#009901 108px,#029900 280px,#249100 330px,#787700 424px,#894100 504px,#921e00 608px)"></div>
<div class="a" style="left:1151px;top:258px;width:609px;height:4px;background:linear-gradient(90deg,#00990b 0px,#009901 114px,#029900 278px,#249100 328px,#777700 420px,#894000 502px,#921c00 608px)"></div>
<div class="a" style="left:1151px;top:262px;width:609px;height:4px;background:linear-gradient(90deg,#00990c 0px,#009901 118px,#019900 276px,#229100 324px,#787600 418px,#8a3f00 500px,#931b00 608px)"></div>
<div class="a" style="left:1151px;top:266px;width:609px;height:4px;background:linear-gradient(90deg,#00990d 0px,#009901 122px,#019900 274px,#239100 322px,#777700 414px,#8a3e00 498px,#931a00 608px)"></div>
<div class="a" style="left:1151px;top:270px;width:609px;height:4px;background:linear-gradient(90deg,#00990e 0px,#009902 126px,#019900 272px,#219100 318px,#787600 412px,#8a3d00 496px,#931900 608px)"></div>
<div class="a" style="left:1151px;top:274px;width:609px;height:4px;background:linear-gradient(90deg,#00990f 0px,#009902 132px,#019900 270px,#219100 316px,#787700 408px,#8a3c00 494px,#941800 608px)"></div>
<div class="a" style="left:1151px;top:278px;width:609px;height:4px;background:linear-gradient(90deg,#009911 0px,#009902 136px,#019900 268px,#219100 314px,#777700 404px,#835700 444px,#8a3c00 490px,#941700 608px)"></div>
<div class="a" style="left:1151px;top:282px;width:609px;height:4px;background:linear-gradient(90deg,#009912 0px,#009902 142px,#019900 266px,#209200 310px,#787600 402px,#835400 444px,#8b3a00 490px,#941500 608px)"></div>
<div class="a" style="left:1151px;top:286px;width:609px;height:4px;background:linear-gradient(90deg,#009913 0px,#009902 148px,#019900 266px,#239100 312px,#777700 398px,#835400 440px,#8b3a00 486px,#941400 608px)"></div>
<div class="a" style="left:1151px;top:290px;width:609px;height:4px;background:linear-gradient(90deg,#009915 0px,#009902 154px,#019900 264px,#229100 308px,#787600 396px,#845300 438px,#8b3900 484px,#951300 608px)"></div>
<div class="a" style="left:1151px;top:294px;width:609px;height:4px;background:linear-gradient(90deg,#009916 0px,#009903 160px,#019900 262px,#229100 306px,#787700 392px,#845300 434px,#8b3800 482px,#951200 608px)"></div>
<div class="a" style="left:1151px;top:298px;width:609px;height:4px;background:linear-gradient(90deg,#009917 0px,#009903 166px,#019900 260px,#209200 302px,#787600 390px,#845200 432px,#8c3700 480px,#951100 608px)"></div>
<div class="a" style="left:1151px;top:302px;width:609px;height:4px;background:linear-gradient(90deg,#009919 0px,#009903 172px,#019900 258px,#209200 300px,#787600 386px,#845100 430px,#8c3600 478px,#951000 608px)"></div>
<div class="a" style="left:1151px;top:306px;width:609px;height:4px;background:linear-gradient(90deg,#00991a 0px,#019900 256px,#219100 298px,#777700 382px,#845100 426px,#8c3600 474px,#960f00 608px)"></div>
<div class="a" style="left:1151px;top:310px;width:609px;height:4px;background:linear-gradient(90deg,#00991c 0px,#019900 254px,#1f9200 294px,#787600 380px,#855000 424px,#8d3400 474px,#960e00 608px)"></div>
<div class="a" style="left:1151px;top:314px;width:609px;height:4px;background:linear-gradient(90deg,#00991e 0px,#019900 254px,#239100 296px,#787700 376px,#855000 420px,#8d3400 470px,#960d00 608px)"></div>
<div class="a" style="left:1151px;top:318px;width:609px;height:4px;background:linear-gradient(90deg,#00991f 0px,#019900 252px,#219100 292px,#787500 374px,#854f00 418px,#8d3200 468px,#960c00 608px)"></div>
<div class="a" style="left:1151px;top:322px;width:609px;height:4px;background:linear-gradient(90deg,#009921 0px,#019901 250px,#219100 290px,#787600 370px,#854f00 414px,#8d3100 466px,#931b00 530px,#970b00 608px)"></div>
<div class="a" style="left:1151px;top:326px;width:609px;height:4px;background:linear-gradient(90deg,#009923 0px,#019901 248px,#1f9200 286px,#787500 368px,#854e00 412px,#8e3000 464px,#931a00 528px,#970a00 608px)"></div>
<div class="a" style="left:1151px;top:330px;width:609px;height:4px;background:linear-gradient(90deg,#009925 0px,#019902 246px,#1d9200 282px,#797400 366px,#864d00 410px,#8e2f00 462px,#931900 526px,#970900 608px)"></div>
<div class="a" style="left:1151px;top:334px;width:609px;height:4px;background:linear-gradient(90deg,#009926 0px,#009903 240px,#1c9300 278px,#6a7c00 348px,#7b6e00 368px,#874800 412px,#8f2c00 464px,#970800 608px)"></div>
<div class="a" style="left:1151px;top:338px;width:609px;height:4px;background:linear-gradient(90deg,#009928 0px,#009905 238px,#1a9301 274px,#6b7c00 346px,#7b6d00 366px,#874700 410px,#8f2b00 462px,#970700 608px)"></div>
<div class="a" style="left:1151px;top:342px;width:609px;height:4px;background:linear-gradient(90deg,#00992a 0px,#009907 236px,#1a9302 272px,#6f7a00 346px,#7c6b00 364px,#884600 408px,#8f2a00 460px,#941500 526px,#980600 608px)"></div>
<div class="a" style="left:1151px;top:346px;width:609px;height:4px;background:linear-gradient(90deg,#00992c 0px,#009909 234px,#059807 248px,#1a9303 270px,#737900 346px,#7c6a00 362px,#884500 406px,#8f2900 458px,#941400 524px,#980500 608px)"></div>
<div class="a" style="left:1151px;top:350px;width:609px;height:4px;background:linear-gradient(90deg,#00992f 0px,#00990b 234px,#189405 266px,#6f7a00 340px,#7c6b00 358px,#884500 402px,#902800 456px,#951300 524px,#980400 608px)"></div>
<div class="a" style="left:1151px;top:354px;width:609px;height:4px;background:linear-gradient(90deg,#009931 0px,#00990e 232px,#189407 264px,#737900 340px,#7d6900 356px,#884300 400px,#902700 454px,#951200 522px,#980400 608px)"></div>
<div class="a" style="left:1151px;top:358px;width:609px;height:4px;background:linear-gradient(90deg,#009933 0px,#009910 230px,#16940a 260px,#747800 338px,#7d6800 354px,#894200 398px,#902600 452px,#951100 522px,#980300 608px)"></div>
<div class="a" style="left:1151px;top:362px;width:609px;height:4px;background:linear-gradient(90deg,#009935 0px,#009913 228px,#16940c 258px,#767800 336px,#7e6600 352px,#894000 396px,#912400 452px,#960f00 524px,#980300 608px)"></div>
<div class="a" style="left:1151px;top:366px;width:609px;height:4px;background:linear-gradient(90deg,#009938 0px,#009916 226px,#14950f 254px,#757801 332px,#7d6700 348px,#894000 392px,#912300 448px,#960e00 522px,#990200 608px)"></div>
<div class="a" style="left:1151px;top:370px;width:609px;height:4px;background:linear-gradient(90deg,#00993a 0px,#009919 224px,#149512 252px,#767802 330px,#7e6500 346px,#8a3e00 392px,#912100 448px,#960c00 524px,#990200 608px)"></div>
<div class="a" style="left:1151px;top:374px;width:609px;height:4px;background:linear-gradient(90deg,#00993d 0px,#00991c 222px,#119516 248px,#787703 328px,#7e6401 344px,#8a3c00 390px,#922000 446px,#960b00 524px,#990100 608px)"></div>
<div class="a" style="left:1151px;top:378px;width:609px;height:4px;background:linear-gradient(90deg,#009940 0px,#00991e 222px,#119519 246px,#777805 324px,#7e6402 340px,#8a3c00 386px,#921f00 444px,#970a00 524px,#990100 608px)"></div>
<div class="a" style="left:1151px;top:382px;width:609px;height:4px;background:linear-gradient(90deg,#009943 0px,#009922 220px,#0f961d 242px,#767808 320px,#7f6303 338px,#8b3b00 384px,#921e00 442px,#970900 526px,#990100 608px)"></div>
<div class="a" style="left:1151px;top:386px;width:609px;height:4px;background:linear-gradient(90deg,#009945 0px,#009925 218px,#0f9620 240px,#77770b 318px,#7f6104 336px,#8b3900 382px,#931c00 442px,#970700 528px,#990100 608px)"></div>
<div class="a" style="left:1151px;top:390px;width:609px;height:4px;background:linear-gradient(90deg,#009948 0px,#009929 216px,#0d9624 236px,#76780e 314px,#7f6207 332px,#8b3900 378px,#931c00 438px,#980600 528px,#990000 608px)"></div>
<div class="a" style="left:1151px;top:394px;width:609px;height:4px;background:linear-gradient(90deg,#00994b 0px,#00992d 214px,#0c9628 234px,#777711 312px,#80600a 330px,#8c3600 378px,#931a00 438px,#980600 524px,#990000 608px)"></div>
<div class="a" style="left:1151px;top:398px;width:609px;height:4px;background:linear-gradient(90deg,#00994f 0px,#009931 212px,#0a972d 230px,#777815 308px,#805e0c 328px,#8c3501 376px,#931900 436px,#980500 520px,#990000 608px)"></div>
<div class="a" style="left:1151px;top:402px;width:609px;height:4px;background:linear-gradient(90deg,#009952 0px,#009935 210px,#0a9731 228px,#757819 304px,#805f10 324px,#8c3501 372px,#941800 434px,#980500 516px,#990000 608px)"></div>
<div class="a" style="left:1151px;top:406px;width:609px;height:4px;background:linear-gradient(90deg,#009955 0px,#00993a 208px,#089736 224px,#77771c 302px,#815d12 322px,#8d3302 370px,#941700 432px,#980400 512px,#990000 608px)"></div>
<div class="a" style="left:1151px;top:410px;width:609px;height:4px;background:linear-gradient(90deg,#009959 0px,#00993e 206px,#07973b 222px,#767821 298px,#815b15 320px,#8d3203 368px,#941500 432px,#980400 510px,#990000 608px)"></div>
<div class="a" style="left:1151px;top:414px;width:609px;height:4px;background:linear-gradient(90deg,#00995d 0px,#009943 206px,#079740 220px,#777725 296px,#815c1a 316px,#8d3105 364px,#941400 428px,#980400 504px,#990000 608px)"></div>
<div class="a" style="left:1151px;top:418px;width:609px;height:4px;background:linear-gradient(90deg,#009961 0px,#009948 204px,#079745 218px,#76782a 292px,#825a1d 314px,#8e3007 362px,#951300 426px,#980300 500px,#990000 608px)"></div>
<div class="a" style="left:1151px;top:422px;width:609px;height:4px;background:linear-gradient(90deg,#009965 0px,#00994e 202px,#07984b 216px,#78762e 290px,#825820 312px,#8e2e09 360px,#951100 426px,#980300 498px,#990000 608px)"></div>
<div class="a" style="left:1151px;top:426px;width:609px;height:4px;background:linear-gradient(90deg,#009969 0px,#019952 208px,#249149 236px,#777734 286px,#894118 330px,#922004 382px,#970b00 444px,#990200 502px,#990000 608px)"></div>
<div class="a" style="left:1151px;top:430px;width:609px;height:4px;background:linear-gradient(90deg,#00996d 0px,#019958 206px,#229150 232px,#787639 284px,#89411d 326px,#921d05 382px,#970a00 442px,#990000 608px)"></div>
<div class="a" style="left:1151px;top:434px;width:609px;height:4px;background:linear-gradient(90deg,#009971 0px,#01995e 204px,#229156 230px,#777740 280px,#893f20 324px,#931a06 384px,#970900 442px,#990000 608px)"></div>
<div class="a" style="left:1151px;top:438px;width:609px;height:4px;background:linear-gradient(90deg,#009976 0px,#019965 202px,#22915d 228px,#767846 276px,#893f25 320px,#941807 384px,#970800 438px,#990000 608px)"></div>
<div class="a" style="left:1151px;top:442px;width:609px;height:4px;background:linear-gradient(90deg,#00997b 0px,#01996c 200px,#1f9265 224px,#78764c 274px,#8a3d28 318px,#941608 384px,#980701 438px,#990000 608px)"></div>
<div class="a" style="left:1151px;top:446px;width:609px;height:4px;background:linear-gradient(90deg,#009980 0px,#029973 200px,#23916b 224px,#777854 270px,#8a3d2d 314px,#931c11 364px,#980601 434px,#990000 608px)"></div>
<div class="a" style="left:1151px;top:450px;width:609px;height:4px;background:linear-gradient(90deg,#009985 0px,#01997b 198px,#209274 220px,#78765b 268px,#835646 288px,#8b3b31 312px,#931b14 362px,#980501 430px,#990000 608px)"></div>
<div class="a" style="left:1151px;top:454px;width:609px;height:4px;background:linear-gradient(90deg,#00998b 0px,#019984 196px,#23917b 220px,#777763 264px,#83574e 284px,#8b3b37 308px,#921d1a 352px,#970804 412px,#990000 608px)"></div>
<div class="a" style="left:1151px;top:458px;width:609px;height:4px;background:linear-gradient(90deg,#009991 0px,#01998d 194px,#209285 216px,#76786c 260px,#835453 282px,#8b393b 306px,#931a1c 352px,#980605 414px,#990000 608px)"></div>
<div class="a" style="left:1151px;top:462px;width:609px;height:4px;background:linear-gradient(90deg,#009997 0px,#019996 192px,#20918f 214px,#787675 258px,#83555b 278px,#8b3942 302px,#93191f 350px,#980405 416px,#990000 608px)"></div>
<div class="a" style="left:1151px;top:466px;width:609px;height:4px;background:linear-gradient(90deg,#009599 0px,#029299 192px,#268990 216px,#7a707a 258px,#85505f 278px,#8c3746 300px,#94151f 352px,#980306 416px,#990000 608px)"></div>
<div class="a" style="left:1151px;top:470px;width:609px;height:4px;background:linear-gradient(90deg,#008f99 0px,#018999 190px,#277f90 216px,#7c6a7f 258px,#8c364e 296px,#941422 350px,#990207 418px,#990000 608px)"></div>
<div class="a" style="left:1151px;top:474px;width:609px;height:4px;background:linear-gradient(90deg,#008999 0px,#018099 188px,#2c7590 218px,#7e6484 258px,#8c3453 294px,#951225 348px,#990107 420px,#990000 608px)"></div>
<div class="a" style="left:1151px;top:478px;width:609px;height:4px;background:linear-gradient(90deg,#008499 0px,#027899 188px,#356b92 222px,#5e608a 244px,#815e89 258px,#8d345b 290px,#951128 346px,#990108 420px,#990000 608px)"></div>
<div class="a" style="left:1151px;top:482px;width:609px;height:4px;background:linear-gradient(90deg,#007e99 0px,#01709c 186px,#396294 224px,#5a598d 242px,#82578f 258px,#8d3463 286px,#95102d 342px,#99010b 416px,#990001 474px,#990000 608px)"></div>
<div class="a" style="left:1151px;top:486px;width:609px;height:4px;background:linear-gradient(90deg,#007999 0px,#02699f 186px,#4c5693 234px,#845193 258px,#8d3169 284px,#960f32 338px,#99010d 412px,#990002 472px,#990000 608px)"></div>
<div class="a" style="left:1151px;top:490px;width:609px;height:4px;background:linear-gradient(90deg,#00749b 0px,#0162a2 184px,#175ca0 202px,#4c4f96 234px,#854b98 258px,#8d3172 280px,#921c50 306px,#960f37 334px,#99000f 408px,#990002 472px,#990000 608px)"></div>
<div class="a" style="left:1151px;top:494px;width:609px;height:4px;background:linear-gradient(90deg,#006f9d 0px,#025ba5 184px,#494999 232px,#86459c 258px,#8e2e79 278px,#931a55 304px,#960d3a 332px,#990012 404px,#990002 472px,#990000 608px)"></div>
<div class="a" style="left:1151px;top:498px;width:609px;height:4px;background:linear-gradient(90deg,#006a9f 0px,#0255a8 182px,#43459d 228px,#873fa0 258px,#8e2e83 274px,#931a5d 300px,#960c40 328px,#990015 400px,#990003 472px,#990000 608px)"></div>
<div class="a" style="left:1151px;top:502px;width:609px;height:4px;background:linear-gradient(90deg,#0066a1 0px,#024fab 182px,#4040a0 226px,#883aa4 258px,#8e2d8e 270px,#931a67 294px,#960c47 322px,#990018 394px,#990003 470px,#990000 608px)"></div>
<div class="a" style="left:1151px;top:506px;width:609px;height:4px;background:linear-gradient(90deg,#0061a3 0px,#024aad 180px,#3a3ba3 222px,#8934a8 258px,#8f2b96 268px,#94186d 292px,#970a4b 320px,#99001a 392px,#990004 472px,#990000 608px)"></div>
<div class="a" style="left:1151px;top:510px;width:609px;height:4px;background:linear-gradient(90deg,#005da5 0px,#0244b0 178px,#3837a6 220px,#8a2fac 258px,#931879 286px,#970b56 312px,#990237 346px,#99001f 384px,#990004 470px,#990000 608px)"></div>
<div class="a" style="left:1151px;top:514px;width:609px;height:4px;background:linear-gradient(90deg,#0058a7 0px,#023fb2 178px,#3932aa 220px,#8f29b0 260px,#94167f 284px,#97095b 310px,#99013a 344px,#990022 382px,#990005 472px,#990000 608px)"></div>
<div class="a" style="left:1151px;top:518px;width:609px;height:4px;background:linear-gradient(90deg,#0054a9 0px,#023ab4 176px,#372ead 218px,#9025b4 260px,#951382 284px,#97075d 310px,#99013b 344px,#990023 382px,#990005 474px,#990000 608px)"></div>
<div class="a" style="left:1151px;top:522px;width:609px;height:4px;background:linear-gradient(90deg,#0050ab 0px,#0336b6 176px,#392ab0 218px,#9120b7 260px,#951085 284px,#98045d 312px,#99003d 344px,#990025 380px,#990005 476px,#990000 608px)"></div>
<div class="a" style="left:1151px;top:526px;width:609px;height:4px;background:linear-gradient(90deg,#004cac 0px,#0231b8 174px,#3a25b3 218px,#911bba 260px,#960d88 284px,#98035f 312px,#99003e 344px,#990026 380px,#990006 478px,#990000 608px)"></div>
<div class="a" style="left:1151px;top:530px;width:609px;height:4px;background:linear-gradient(90deg,#0049ae 0px,#032dba 174px,#3b21b6 218px,#9217bd 260px,#970988 286px,#990261 312px,#990040 344px,#990028 380px,#990006 480px,#990000 608px)"></div>
<div class="a" style="left:1151px;top:534px;width:609px;height:4px;background:linear-gradient(90deg,#0045b0 0px,#0229bc 172px,#391eb9 216px,#9213c0 260px,#98068a 286px,#990163 312px,#990043 342px,#99002a 378px,#990006 482px,#990000 608px)"></div>
<div class="a" style="left:1151px;top:538px;width:609px;height:4px;background:linear-gradient(90deg,#0041b1 0px,#0325bd 172px,#3a1abb 216px,#920fc3 260px,#980389 288px,#990064 312px,#990044 342px,#99002b 378px,#990007 484px,#990000 608px)"></div>
<div class="a" style="left:1151px;top:542px;width:609px;height:4px;background:linear-gradient(90deg,#003eb3 0px,#0322bf 170px,#3b17be 216px,#930cc6 260px,#99028b 288px,#990066 312px,#990046 342px,#99002c 378px,#990007 486px,#990000 608px)"></div>
<div class="a" style="left:1151px;top:546px;width:609px;height:4px;background:linear-gradient(90deg,#003bb4 0px,#031ec0 170px,#3c13c0 216px,#9708c8 262px,#990195 284px,#99006a 310px,#990049 340px,#99002f 376px,#990008 486px,#990000 608px)"></div>
<div class="a" style="left:1151px;top:550px;width:609px;height:4px;background:linear-gradient(90deg,#0037b6 0px,#031bc2 168px,#3d10c3 216px,#9805cb 262px,#990196 284px,#99006b 310px,#99004a 340px,#990030 376px,#990019 426px,#990008 488px,#990000 608px)"></div>
<div class="a" style="left:1151px;top:554px;width:609px;height:4px;background:linear-gradient(90deg,#0034b7 0px,#0218c3 166px,#3b0dc5 214px,#9802cd 262px,#990098 284px,#99006c 310px,#99004b 340px,#990031 376px,#99001a 426px,#990009 488px,#990000 608px)"></div>
<div class="a" style="left:1151px;top:558px;width:609px;height:4px;background:linear-gradient(90deg,#0031b9 0px,#0315c4 166px,#3c0ac7 214px,#9701ce 262px,#990095 286px,#99006e 310px,#99004d 340px,#990032 376px,#99000a 486px,#990000 608px)"></div>
<div class="a" style="left:1151px;top:562px;width:609px;height:4px;background:linear-gradient(90deg,#002eba 0px,#0312c6 164px,#3a08c9 212px,#9700ce 262px,#990096 286px,#99006f 310px,#99004e 340px,#990033 376px,#99000b 486px,#990000 608px)"></div>
<div class="a" style="left:1151px;top:566px;width:609px;height:4px;background:linear-gradient(90deg,#002bbb 0px,#030fc7 164px,#3e05cb 214px,#9700ce 262px,#990097 286px,#990070 310px,#99004f 340px,#990035 376px,#99000c 484px,#990000 608px)"></div>
<div class="a" style="left:1151px;top:570px;width:609px;height:4px;background:linear-gradient(90deg,#0028bd 0px,#030dc8 162px,#3c03cc 212px,#9600cf 262px,#990098 286px,#990071 310px,#990050 340px,#990036 376px,#99000d 484px,#990000 608px)"></div>
<div class="a" style="left:1151px;top:574px;width:609px;height:4px;background:linear-gradient(90deg,#0026be 0px,#040ac9 162px,#3d02cd 212px,#9600cf 262px,#990096 288px,#990070 312px,#990050 342px,#990036 378px,#99000e 484px,#990001 608px)"></div>
<div class="a" style="left:1151px;top:578px;width:609px;height:4px;background:linear-gradient(90deg,#0023bf 0px,#0308ca 160px,#3e01ce 212px,#9900ce 264px,#99009e 284px,#990074 310px,#990053 340px,#990037 378px,#99000f 484px,#990001 608px)"></div>
<div class="a" style="left:1151px;top:582px;width:609px;height:4px;background:linear-gradient(90deg,#0021c0 0px,#0406cb 160px,#3e00ce 212px,#9900cf 264px,#99009c 286px,#990075 310px,#990054 340px,#990038 378px,#990010 482px,#990001 608px)"></div>
<div class="a" style="left:1151px;top:586px;width:609px;height:4px;background:linear-gradient(90deg,#001ec1 0px,#0304cc 158px,#3f00ce 212px,#9800cf 264px,#99009d 286px,#990074 312px,#990053 342px,#990039 378px,#990011 482px,#990001 608px)"></div>
<div class="a" style="left:1151px;top:590px;width:609px;height:4px;background:linear-gradient(90deg,#001cc2 0px,#0303cd 156px,#3d00cf 210px,#9800cf 264px,#99009e 286px,#990075 312px,#990055 342px,#990039 380px,#990011 482px,#990001 608px)"></div>
<div class="a" style="left:1151px;top:594px;width:609px;height:4px;background:linear-gradient(90deg,#0019c3 0px,#0402cd 156px,#3e00cf 210px,#9700cf 264px,#99009b 288px,#990076 312px,#990056 342px,#99003a 380px,#990012 482px,#990001 608px)"></div>
<div class="a" style="left:1151px;top:598px;width:609px;height:4px;background:linear-gradient(90deg,#0017c4 0px,#0301ce 154px,#3e00cf 210px,#9700cf 264px,#99009c 288px,#990075 314px,#990055 344px,#99003b 380px,#990013 482px,#990001 608px)"></div>
<div class="a" style="left:1151px;top:602px;width:609px;height:4px;background:linear-gradient(90deg,#0015c5 0px,#0400ce 154px,#3f00cf 210px,#9600cf 264px,#990099 290px,#990076 314px,#990056 344px,#99003c 380px,#990014 480px,#990002 608px)"></div>
<div class="a" style="left:1151px;top:606px;width:609px;height:4px;background:linear-gradient(90deg,#0013c6 0px,#0300ce 152px,#3d00cf 208px,#9600cf 264px,#99009a 290px,#990077 314px,#990056 346px,#99003c 382px,#990015 482px,#990002 608px)"></div>
<div class="a" style="left:1151px;top:610px;width:609px;height:4px;background:linear-gradient(90deg,#0011c7 0px,#0400ce 152px,#4000cf 210px,#9900ce 266px,#99009f 288px,#990078 314px,#990057 346px,#99003d 382px,#990016 480px,#990002 608px)"></div>
<div class="a" style="left:1151px;top:614px;width:609px;height:4px;background:linear-gradient(90deg,#000fc8 0px,#0400cf 150px,#3e00cf 208px,#9900cf 266px,#9900a0 288px,#990079 314px,#990058 346px,#99003e 382px,#990017 480px,#990002 608px)"></div>
<div class="a" style="left:1151px;top:618px;width:609px;height:4px;background:linear-gradient(90deg,#000dc9 0px,#0400cf 150px,#4100cf 210px,#9800cf 266px,#9900a1 288px,#99007a 314px,#990059 346px,#99003f 382px,#990017 480px,#990002 608px)"></div>
<div class="a" style="left:1151px;top:622px;width:609px;height:4px;background:linear-gradient(90deg,#000bca 0px,#0400cf 148px,#3f00cf 208px,#9800cf 266px,#99009e 290px,#990079 316px,#99005a 346px,#990040 382px,#990018 480px,#990003 608px)"></div>
<div class="a" style="left:1151px;top:626px;width:609px;height:4px;background:linear-gradient(90deg,#0009ca 0px,#0500cf 148px,#4000cf 208px,#9800cf 266px,#99009f 290px,#99007a 316px,#990059 348px,#990040 384px,#990019 480px,#990003 608px)"></div>
<div class="a" style="left:1151px;top:630px;width:609px;height:4px;background:linear-gradient(90deg,#0007cb 0px,#0400cf 146px,#3e00cf 206px,#9700cf 266px,#99009d 292px,#99007b 316px,#99005a 348px,#990041 384px,#99001a 480px,#990003 608px)"></div>
<div class="a" style="left:1151px;top:634px;width:609px;height:4px;background:linear-gradient(90deg,#0006cc 0px,#0400cf 144px,#3f00cf 206px,#9700cf 266px,#99009e 292px,#990079 318px,#990042 384px,#99001b 480px,#990004 608px)"></div>
<div class="a" style="left:1151px;top:638px;width:609px;height:4px;background:linear-gradient(90deg,#0004cd 0px,#0400cf 144px,#3f00cf 206px,#9600cf 266px,#99009e 292px,#99007a 318px,#990043 384px,#99001b 480px,#990004 608px)"></div>
<div class="a" style="left:1151px;top:642px;width:609px;height:4px;background:linear-gradient(90deg,#0003cd 0px,#0400cf 142px,#4000cf 206px,#9900ce 268px,#9900a3 290px,#99007e 316px,#99005d 348px,#990044 384px,#99001d 478px,#990004 608px)"></div>
<div class="a" style="left:1151px;top:646px;width:609px;height:4px;background:linear-gradient(90deg,#0002ce 0px,#0500cf 142px,#4000cf 206px,#9900cf 268px,#9900a0 292px,#99007c 318px,#990045 384px,#99001d 478px,#990005 608px)"></div>
<div class="a" style="left:1151px;top:650px;width:609px;height:4px;background:linear-gradient(90deg,#0002ce 0px,#0400cf 140px,#4100cf 206px,#9900cf 268px,#9900a1 292px,#99007d 318px,#990044 386px,#99001e 480px,#990005 608px)"></div>
<div class="a" style="left:1151px;top:654px;width:609px;height:4px;background:linear-gradient(90deg,#0001ce 0px,#0500cf 140px,#4100cf 206px,#9800cf 268px,#9900a2 292px,#99007e 318px,#990045 386px,#99001e 480px,#990006 608px)"></div>
<div class="a" style="left:1151px;top:658px;width:609px;height:4px;background:linear-gradient(90deg,#0001ce 0px,#0400cf 138px,#4000cf 204px,#9800cf 268px,#99009f 294px,#99007d 320px,#990046 386px,#99001f 480px,#990006 608px)"></div>
<div class="a" style="left:1151px;top:662px;width:609px;height:4px;background:linear-gradient(90deg,#0000ce 0px,#0500cf 138px,#4000cf 204px,#9700cf 268px,#9900a0 294px,#99007e 320px,#990046 388px,#990020 480px,#990006 608px)"></div>
<div class="a" style="left:1151px;top:666px;width:609px;height:4px;background:linear-gradient(90deg,#0000ce 0px,#0500cf 136px,#4100cf 204px,#9700cf 268px,#9900a1 294px,#99007e 320px,#990047 388px,#990020 480px,#990007 608px)"></div>
<div class="a" style="left:1151px;top:670px;width:609px;height:2px;background:linear-gradient(90deg,#0000ce 0px,#0500cf 136px,#4100cf 204px,#9700cf 268px,#9900a1 294px,#99007f 320px,#990047 388px,#990021 480px,#990007 608px)"></div>
</div>
<div class="a" style="left:0;top:0;width:1920px;height:1039px;clip-path:polygon(1676.1px 464.4px,1397.3px 296.3px,1274.3px 632.5px)">
<div class="a" style="left:1270px;top:294px;width:410px;height:3px;background:linear-gradient(90deg,#00ff3a 0px,#00ff00 128px,#59ff00 172px,#feff00 272px,#ffb400 332px,#ff7a00 410px)"></div>
<div class="a" style="left:1270px;top:297px;width:410px;height:3px;background:linear-gradient(90deg,#00ff3c 0px,#01ff00 128px,#54ff00 168px,#feff00 270px,#ffd700 298px,#ffb300 330px,#ff7800 410px)"></div>
<div class="a" style="left:1270px;top:300px;width:410px;height:3px;background:linear-gradient(90deg,#00ff3e 0px,#00ff23 70px,#00ff03 126px,#57ff00 168px,#ffff00 268px,#ffd600 296px,#ffb300 328px,#ff7600 410px)"></div>
<div class="a" style="left:1270px;top:303px;width:410px;height:3px;background:linear-gradient(90deg,#00ff41 0px,#00ff25 72px,#01ff05 126px,#56ff00 166px,#fffe00 266px,#ffd500 294px,#ffb200 326px,#ff7400 410px)"></div>
<div class="a" style="left:1270px;top:306px;width:410px;height:3px;background:linear-gradient(90deg,#00ff43 0px,#00ff28 72px,#00ff0a 124px,#2aff01 142px,#59ff00 166px,#fffe00 264px,#ffd400 292px,#ffaf00 326px,#ff7200 410px)"></div>
<div class="a" style="left:1270px;top:309px;width:410px;height:3px;background:linear-gradient(90deg,#00ff46 0px,#00ff2b 72px,#01ff0e 124px,#31ff02 144px,#58ff00 164px,#fffd00 262px,#ffd300 290px,#ffae00 324px,#ff7000 410px)"></div>
<div class="a" style="left:1270px;top:312px;width:410px;height:3px;background:linear-gradient(90deg,#00ff48 0px,#01ff13 122px,#48ff00 154px,#feff00 258px,#ffd300 288px,#ffad00 322px,#ff6e00 410px)"></div>
<div class="a" style="left:1270px;top:315px;width:410px;height:3px;background:linear-gradient(90deg,#00ff4b 0px,#02ff17 122px,#52ff00 158px,#ffff00 256px,#ffd200 286px,#ffac00 320px,#ff6c00 410px)"></div>
<div class="a" style="left:1270px;top:318px;width:410px;height:3px;background:linear-gradient(90deg,#00ff4e 0px,#01ff1c 120px,#60ff00 164px,#fffe00 254px,#ffd100 284px,#ffab00 318px,#ff6900 410px)"></div>
<div class="a" style="left:1270px;top:321px;width:410px;height:3px;background:linear-gradient(90deg,#00ff50 0px,#00ff20 118px,#6bff00 168px,#fffe00 252px,#ffd000 282px,#ffa800 318px,#ff6700 410px)"></div>
<div class="a" style="left:1270px;top:324px;width:410px;height:3px;background:linear-gradient(90deg,#00ff53 0px,#01ff24 118px,#36ff16 140px,#75ff01 172px,#fffd00 250px,#ffcf00 280px,#ffa700 316px,#ff6500 410px)"></div>
<div class="a" style="left:1270px;top:327px;width:410px;height:3px;background:linear-gradient(90deg,#00ff55 0px,#00ff28 116px,#3dff19 142px,#7fff01 176px,#feff00 246px,#ffce00 278px,#ffa600 314px,#ff8200 358px,#ff6300 410px)"></div>
<div class="a" style="left:1270px;top:330px;width:410px;height:3px;background:linear-gradient(90deg,#00ff58 0px,#01ff2c 116px,#3cff1e 140px,#8eff01 182px,#ffff00 244px,#ffd000 274px,#ffa500 312px,#ff8100 356px,#ff6100 410px)"></div>
<div class="a" style="left:1270px;top:333px;width:410px;height:3px;background:linear-gradient(90deg,#00ff5b 0px,#00ff30 114px,#43ff20 142px,#98ff01 186px,#fffe00 242px,#ffcf00 272px,#ffa400 310px,#ff7f00 356px,#ff5f00 410px)"></div>
<div class="a" style="left:1270px;top:336px;width:410px;height:3px;background:linear-gradient(90deg,#00ff5d 0px,#02ff33 114px,#42ff25 140px,#a3ff01 190px,#fffe00 240px,#ffcb00 272px,#ffa100 310px,#ff7d00 356px,#ff5d00 410px)"></div>
<div class="a" style="left:1270px;top:339px;width:410px;height:3px;background:linear-gradient(90deg,#00ff60 0px,#00ff38 112px,#49ff28 142px,#b2ff01 196px,#fffd00 238px,#ffca00 270px,#ffa000 308px,#ff7b00 354px,#ff5b00 410px)"></div>
<div class="a" style="left:1270px;top:342px;width:410px;height:3px;background:linear-gradient(90deg,#00ff63 0px,#02ff3b 112px,#4cff2c 142px,#bdff02 200px,#feff00 234px,#ffc900 268px,#ff9f00 306px,#ff7a00 352px,#ff5900 410px)"></div>
<div class="a" style="left:1270px;top:345px;width:410px;height:3px;background:linear-gradient(90deg,#00ff66 0px,#01ff3f 110px,#4fff2f 142px,#c9ff02 204px,#ffff00 232px,#ffcb00 264px,#ff9e00 304px,#ff7800 352px,#ff5700 410px)"></div>
<div class="a" style="left:1270px;top:348px;width:410px;height:3px;background:linear-gradient(90deg,#00ff68 0px,#00ff44 108px,#5bff31 146px,#d4ff03 208px,#ffff00 230px,#ffca00 262px,#ff9d00 302px,#ff7700 350px,#ff5500 410px)"></div>
<div class="a" style="left:1270px;top:351px;width:410px;height:3px;background:linear-gradient(90deg,#00ff6b 0px,#01ff47 108px,#5aff36 144px,#e4ff02 214px,#fffe00 228px,#ffc900 260px,#ff9c00 300px,#ff7400 350px,#ff5200 410px)"></div>
<div class="a" style="left:1270px;top:354px;width:410px;height:3px;background:linear-gradient(90deg,#00ff6e 0px,#00ff4b 106px,#5dff3a 144px,#fffd00 226px,#ffc500 260px,#ff9900 300px,#ff7200 350px,#ff5000 410px)"></div>
<div class="a" style="left:1270px;top:357px;width:410px;height:3px;background:linear-gradient(90deg,#00ff71 0px,#01ff4f 106px,#57ff40 140px,#b5ff24 186px,#feff04 222px,#ffc700 256px,#ff9a00 296px,#ff7200 346px,#ff4e00 410px)"></div>
<div class="a" style="left:1270px;top:360px;width:410px;height:3px;background:linear-gradient(90deg,#00ff74 0px,#00ff53 104px,#56ff44 138px,#b9ff29 186px,#ffff0b 220px,#ffe801 232px,#ffc600 254px,#ff9800 294px,#ff7000 346px,#ff4c00 410px)"></div>
<div class="a" style="left:1270px;top:363px;width:410px;height:3px;background:linear-gradient(90deg,#00ff77 0px,#02ff57 104px,#55ff49 136px,#ffff13 218px,#ffda00 238px,#ff9500 294px,#ff6d00 346px,#ff4a00 410px)"></div>
<div class="a" style="left:1270px;top:366px;width:410px;height:3px;background:linear-gradient(90deg,#00ff7a 0px,#00ff5b 102px,#59ff4d 136px,#fffe1a 216px,#ffcf01 242px,#ff9400 292px,#ff6c00 344px,#ff4800 410px)"></div>
<div class="a" style="left:1270px;top:369px;width:410px;height:3px;background:linear-gradient(90deg,#00ff7d 0px,#02ff5f 102px,#57ff52 134px,#fffd21 214px,#ffc902 244px,#ff9300 290px,#ff6900 344px,#ff4600 410px)"></div>
<div class="a" style="left:1270px;top:372px;width:410px;height:3px;background:linear-gradient(90deg,#00ff80 0px,#01ff63 100px,#5bff56 134px,#fffc28 212px,#ffbf02 248px,#ff9200 288px,#ff6800 342px,#ff4400 410px)"></div>
<div class="a" style="left:1270px;top:375px;width:410px;height:3px;background:linear-gradient(90deg,#00ff83 0px,#00ff67 98px,#5aff5a 132px,#feff30 208px,#ffb904 250px,#ff9100 286px,#ff6700 340px,#ff4100 410px)"></div>
<div class="a" style="left:1270px;top:378px;width:410px;height:3px;background:linear-gradient(90deg,#00ff86 0px,#01ff6b 98px,#58ff5f 130px,#ffff37 206px,#ffce19 232px,#ffa600 262px,#ff6e00 326px,#ff3f00 410px)"></div>
<div class="a" style="left:1270px;top:381px;width:410px;height:3px;background:linear-gradient(90deg,#00ff8a 0px,#00ff70 96px,#5cff63 130px,#fffe3d 204px,#ffca1d 232px,#ff9e01 266px,#ff6a00 328px,#ff3d00 410px)"></div>
<div class="a" style="left:1270px;top:384px;width:410px;height:3px;background:linear-gradient(90deg,#00ff8d 0px,#01ff73 96px,#5bff68 128px,#fffd43 202px,#ffc621 232px,#ff9701 270px,#ff6600 330px,#ff3b00 410px)"></div>
<div class="a" style="left:1270px;top:387px;width:410px;height:3px;background:linear-gradient(90deg,#00ff90 0px,#00ff78 94px,#5eff6c 128px,#fffc49 200px,#ffc224 232px,#ff9001 274px,#ff6100 334px,#ff3900 410px)"></div>
<div class="a" style="left:1270px;top:390px;width:410px;height:3px;background:linear-gradient(90deg,#00ff94 0px,#02ff7c 94px,#53ff73 122px,#feff51 196px,#ffbe27 232px,#ff8901 278px,#ff5d00 336px,#ff3700 410px)"></div>
<div class="a" style="left:1270px;top:393px;width:410px;height:3px;background:linear-gradient(90deg,#00ff97 0px,#00ff81 92px,#57ff77 122px,#ffff57 194px,#ffba2b 232px,#ff8402 280px,#ff5a00 336px,#ff3400 410px)"></div>
<div class="a" style="left:1270px;top:396px;width:410px;height:3px;background:linear-gradient(90deg,#00ff9a 0px,#02ff85 92px,#56ff7c 120px,#fffe5d 192px,#ffb52e 232px,#ff7d03 284px,#ff5500 340px,#ff3200 410px)"></div>
<div class="a" style="left:1270px;top:399px;width:410px;height:3px;background:linear-gradient(90deg,#00ff9e 0px,#01ff89 90px,#5aff80 120px,#fffd63 190px,#ffd448 210px,#ffb131 232px,#ff7703 288px,#ff5200 342px,#ff3000 410px)"></div>
<div class="a" style="left:1270px;top:402px;width:410px;height:3px;background:linear-gradient(90deg,#00ffa2 0px,#00ff8e 88px,#5dff85 120px,#fffc68 188px,#ffd34d 208px,#ffad33 232px,#ff7003 292px,#ff4e00 344px,#ff2e00 410px)"></div>
<div class="a" style="left:1270px;top:405px;width:410px;height:3px;background:linear-gradient(90deg,#00ffa5 0px,#01ff92 88px,#57ff8a 116px,#feff71 184px,#ffd152 206px,#ffac38 230px,#ff6c05 294px,#ff2b00 410px)"></div>
<div class="a" style="left:1270px;top:408px;width:410px;height:3px;background:linear-gradient(90deg,#00ffa9 0px,#00ff97 86px,#5bff8f 116px,#ffff77 182px,#ffd057 204px,#ffa83b 230px,#ff6605 298px,#ff2900 410px)"></div>
<div class="a" style="left:1270px;top:411px;width:410px;height:3px;background:linear-gradient(90deg,#00ffad 0px,#01ff9c 86px,#59ff94 114px,#fffe7d 180px,#ffcf5c 202px,#ffa43d 230px,#ff8122 262px,#ff6005 302px,#ff2700 410px)"></div>
<div class="a" style="left:1270px;top:414px;width:410px;height:3px;background:linear-gradient(90deg,#00ffb1 0px,#00ffa1 84px,#5eff99 114px,#fffd83 178px,#ffca5f 202px,#ffa040 230px,#ff7c23 264px,#ff5c06 304px,#ff4f00 324px,#ff2400 410px)"></div>
<div class="a" style="left:1270px;top:417px;width:410px;height:3px;background:linear-gradient(90deg,#00ffb5 0px,#02ffa5 84px,#5cff9f 112px,#fffc89 176px,#ffc964 200px,#ff9c42 230px,#ff7724 266px,#ff5707 308px,#ff4a00 328px,#ff2200 410px)"></div>
<div class="a" style="left:1270px;top:420px;width:410px;height:3px;background:linear-gradient(90deg,#00ffb9 0px,#00ffab 82px,#55ffa5 108px,#feff92 172px,#ffc769 198px,#ff9b47 228px,#ff7528 264px,#ff5208 310px,#ff4500 332px,#ff1f00 410px)"></div>
<div class="a" style="left:1270px;top:423px;width:410px;height:3px;background:linear-gradient(90deg,#00ffbd 0px,#02ffaf 82px,#54ffaa 106px,#ffff98 170px,#ffb561 206px,#ff7931 256px,#ff4502 328px,#ff1d00 410px)"></div>
<div class="a" style="left:1270px;top:426px;width:410px;height:3px;background:linear-gradient(90deg,#00ffc1 0px,#01ffb5 80px,#58ffaf 106px,#fffe9f 168px,#ffd881 184px,#ffb465 204px,#ff7735 254px,#ff4103 330px,#ff1a00 410px)"></div>
<div class="a" style="left:1270px;top:429px;width:410px;height:3px;background:linear-gradient(90deg,#00ffc5 0px,#03ffba 80px,#56ffb5 104px,#fffda5 166px,#ffd787 182px,#ffb26a 202px,#ff7638 252px,#ff3c03 334px,#ff1800 410px)"></div>
<div class="a" style="left:1270px;top:432px;width:410px;height:3px;background:linear-gradient(90deg,#00ffca 0px,#01ffbf 78px,#5bffbb 104px,#fffcab 164px,#ffd58c 180px,#ffb16f 200px,#ff743c 250px,#ff3703 338px,#ff1500 410px)"></div>
<div class="a" style="left:1270px;top:435px;width:410px;height:3px;background:linear-gradient(90deg,#00ffce 0px,#00ffc5 76px,#5fffc0 104px,#fffbb1 162px,#ffd491 178px,#ffaf73 198px,#ff7340 248px,#ff3304 340px,#ff1300 410px)"></div>
<div class="a" style="left:1270px;top:438px;width:410px;height:3px;background:linear-gradient(90deg,#00ffd3 0px,#01ffca 76px,#58ffc7 100px,#ffffbc 158px,#ffd79a 174px,#ffb17b 194px,#ff7345 244px,#ff5025 288px,#ff3005 342px,#ff1000 410px)"></div>
<div class="a" style="left:1270px;top:441px;width:410px;height:3px;background:linear-gradient(90deg,#00ffd7 0px,#00ffd0 74px,#5cffcc 100px,#fffec2 156px,#ffd5a0 172px,#ffaf7f 192px,#ff7149 242px,#ff4d27 288px,#ff2b06 346px,#ff0d00 410px)"></div>
<div class="a" style="left:1270px;top:444px;width:410px;height:3px;background:linear-gradient(90deg,#00ffdc 0px,#02ffd6 74px,#5bffd3 98px,#fffdc9 154px,#ffd4a5 170px,#ffae84 190px,#ff704d 240px,#ff4a2a 288px,#ff2707 348px,#ff0a00 410px)"></div>
<div class="a" style="left:1270px;top:447px;width:410px;height:3px;background:linear-gradient(90deg,#00ffe1 0px,#00ffdc 72px,#60ffd9 98px,#fffccf 152px,#ffd2ab 168px,#ffac89 188px,#ff6e50 238px,#ff472c 288px,#ff2207 352px,#ff0700 410px)"></div>
<div class="a" style="left:1270px;top:450px;width:410px;height:3px;background:linear-gradient(90deg,#00ffe6 0px,#03ffe2 72px,#5effe0 96px,#fffad6 150px,#ffd1b0 166px,#ffab8d 186px,#ff6a52 238px,#ff432e 288px,#ff1f08 354px,#ff0500 410px)"></div>
<div class="a" style="left:1270px;top:453px;width:410px;height:3px;background:linear-gradient(90deg,#00ffeb 0px,#01ffe8 70px,#56ffe6 92px,#ffffe2 146px,#ffd4ba 162px,#ffac95 182px,#ff6a58 234px,#ff4231 286px,#ff1a08 358px,#ff0300 410px)"></div>
<div class="a" style="left:1270px;top:456px;width:410px;height:3px;background:linear-gradient(90deg,#00fff1 0px,#03ffee 70px,#54ffed 90px,#fffee9 144px,#ffd2c0 160px,#ffab9a 180px,#ff695b 232px,#ff3f33 286px,#ff1609 360px,#ff0100 410px)"></div>
<div class="a" style="left:1270px;top:459px;width:410px;height:3px;background:linear-gradient(90deg,#00fff6 0px,#01fff5 68px,#59fff4 90px,#fffdf0 142px,#ffccc1 160px,#ffa59c 180px,#ff655d 232px,#ff413a 278px,#ff1e17 338px,#ff0a04 378px,#ff0000 410px)"></div>
<div class="a" style="left:1270px;top:462px;width:410px;height:3px;background:linear-gradient(90deg,#00fffc 0px,#00fffb 66px,#5efffb 90px,#fffcf7 140px,#ffcbc7 158px,#ffa4a0 178px,#ff6361 230px,#ff2220 324px,#ff0705 378px,#ff0000 410px)"></div>
<div class="a" style="left:1270px;top:465px;width:410px;height:3px;background:linear-gradient(90deg,#00fdff 0px,#01fcff 66px,#54fcff 86px,#fffafe 138px,#ffc9cd 156px,#ffa2a5 176px,#ff7f82 200px,#ff5f62 230px,#ff1c1f 330px,#ff0407 378px,#ff0000 410px)"></div>
<div class="a" style="left:1270px;top:468px;width:410px;height:3px;background:linear-gradient(90deg,#00f7ff 0px,#00f5ff 64px,#57f5ff 86px,#fff2ff 138px,#ffc3ce 156px,#ff9da7 176px,#ff7982 202px,#ff5a62 232px,#ff323a 286px,#ff0912 360px,#ff0000 410px)"></div>
<div class="a" style="left:1270px;top:471px;width:410px;height:3px;background:linear-gradient(90deg,#00f2ff 0px,#02efff 64px,#53eeff 84px,#feeaff 138px,#ffbdcf 156px,#ff97a8 176px,#ff5a67 228px,#ff313e 282px,#ff0917 354px,#ff0001 410px)"></div>
<div class="a" style="left:1270px;top:474px;width:410px;height:3px;background:linear-gradient(90deg,#00ecff 0px,#00e9ff 62px,#55e7ff 84px,#fee2ff 138px,#ffb6d0 156px,#ff92a9 176px,#ff5669 228px,#ff2f41 280px,#ff071b 350px,#ff0002 410px)"></div>
<div class="a" style="left:1270px;top:477px;width:410px;height:3px;background:linear-gradient(90deg,#00e7ff 0px,#02e2ff 62px,#5ee0ff 86px,#ffd6fb 140px,#ffaccd 158px,#ff8aa8 178px,#ff5069 230px,#ff2c43 280px,#ff061e 346px,#ff0003 410px)"></div>
<div class="a" style="left:1270px;top:480px;width:410px;height:3px;background:linear-gradient(90deg,#00e1ff 0px,#00dcff 60px,#60d9ff 86px,#ffcffb 140px,#ffa6ce 158px,#ff85a9 178px,#ff4c6a 230px,#ff2a46 278px,#ff0623 340px,#ff0004 410px)"></div>
<div class="a" style="left:1270px;top:483px;width:410px;height:3px;background:linear-gradient(90deg,#00dcff 0px,#03d6ff 60px,#5cd3ff 84px,#ffc8fc 140px,#ffa1cf 158px,#ff80aa 178px,#ff496c 230px,#ff2748 276px,#ff0527 336px,#ff0005 410px)"></div>
<div class="a" style="left:1270px;top:486px;width:410px;height:3px;background:linear-gradient(90deg,#00d7ff 0px,#01d1ff 58px,#5ecdff 84px,#ffc1fc 140px,#ff9bd0 158px,#ff7bab 178px,#ff456d 230px,#ff052b 330px,#ff0007 410px)"></div>
<div class="a" style="left:1270px;top:489px;width:410px;height:3px;background:linear-gradient(90deg,#00d2ff 0px,#03cbff 58px,#5ac7ff 82px,#ffbafd 140px,#ff95d1 158px,#ff77ad 178px,#ff416f 230px,#ff042f 326px,#ff0008 410px)"></div>
<div class="a" style="left:1270px;top:492px;width:410px;height:3px;background:linear-gradient(90deg,#00cdff 0px,#01c5ff 56px,#56c1ff 80px,#ffb3fe 140px,#ff89ca 162px,#ff639c 190px,#ff4276 224px,#ff2455 264px,#ff0130 326px,#ff000a 410px)"></div>
<div class="a" style="left:1270px;top:495px;width:410px;height:3px;background:linear-gradient(90deg,#00c8ff 0px,#04c0ff 56px,#58bbff 80px,#ffacfe 140px,#ff80c7 164px,#ff5a98 194px,#ff3972 230px,#ff194e 276px,#ff0134 322px,#ff000c 410px)"></div>
<div class="a" style="left:1270px;top:498px;width:410px;height:3px;background:linear-gradient(90deg,#00c3ff 0px,#01baff 54px,#54b6ff 78px,#ffa6ff 140px,#ff78c4 166px,#ff4f92 200px,#ff2c69 242px,#ff0945 294px,#ff0036 320px,#ff000e 410px)"></div>
<div class="a" style="left:1270px;top:501px;width:410px;height:3px;background:linear-gradient(90deg,#00beff 0px,#00b5ff 52px,#57b0ff 78px,#ff9fff 140px,#ff73c5 166px,#ff4d96 198px,#ff2b6d 238px,#ff0849 290px,#ff003b 314px,#ff0010 410px)"></div>
<div class="a" style="left:1270px;top:504px;width:410px;height:3px;background:linear-gradient(90deg,#00b9ff 0px,#02b0ff 52px,#53abff 76px,#fe98ff 140px,#ff6dc6 166px,#ff4b9a 196px,#ff2870 236px,#ff074e 284px,#ff0041 306px,#ff0011 410px)"></div>
<div class="a" style="left:1270px;top:507px;width:410px;height:3px;background:linear-gradient(90deg,#00b5ff 0px,#00abff 50px,#55a5ff 76px,#fe92ff 140px,#ff68c7 166px,#ff469b 196px,#ff2673 234px,#ff0651 280px,#ff0045 300px,#ff0013 410px)"></div>
<div class="a" style="left:1270px;top:510px;width:410px;height:3px;background:linear-gradient(90deg,#00b0ff 0px,#02a6ff 50px,#5d9fff 78px,#ff88fb 142px,#ff63c8 166px,#ff429c 196px,#ff2377 232px,#ff0657 274px,#ff0014 410px)"></div>
<div class="a" style="left:1270px;top:513px;width:410px;height:3px;background:linear-gradient(90deg,#00abff 0px,#00a1ff 48px,#5e99ff 78px,#ff82fc 142px,#ff5ec9 166px,#ff3fa0 194px,#ff227b 228px,#ff045b 270px,#ff0016 410px)"></div>
<div class="a" style="left:1270px;top:516px;width:410px;height:3px;background:linear-gradient(90deg,#00a7ff 0px,#029cff 48px,#5b94ff 76px,#ff7cfc 142px,#ff5bce 164px,#ff3ca3 192px,#ff2180 224px,#ff0460 264px,#ff003c 326px,#ff0018 410px)"></div>
<div class="a" style="left:1270px;top:519px;width:410px;height:3px;background:linear-gradient(90deg,#00a2ff 0px,#0197ff 46px,#5d8fff 76px,#ff75fd 142px,#ff56cf 164px,#ff39a7 190px,#ff0466 258px,#ff003f 322px,#ff0019 410px)"></div>
<div class="a" style="left:1270px;top:522px;width:410px;height:3px;background:linear-gradient(90deg,#009eff 0px,#0392ff 46px,#598aff 74px,#ff6ffd 142px,#ff50d0 164px,#ff36ab 188px,#ff036b 252px,#ff0041 320px,#ff001a 410px)"></div>
<div class="a" style="left:1270px;top:525px;width:410px;height:3px;background:linear-gradient(90deg,#0099ff 0px,#018eff 44px,#5b85ff 74px,#ff69fe 142px,#ff4dd4 162px,#ff33af 186px,#ff0270 248px,#ff0045 316px,#ff001c 410px)"></div>
<div class="a" style="left:1270px;top:528px;width:410px;height:3px;background:linear-gradient(90deg,#0095ff 0px,#0389ff 44px,#5880ff 72px,#ff63fe 142px,#ff48d5 162px,#ff30b2 184px,#ff0276 242px,#ff0048 312px,#ff001d 410px)"></div>
<div class="a" style="left:1270px;top:531px;width:410px;height:3px;background:linear-gradient(90deg,#0090ff 0px,#0185ff 42px,#547cff 70px,#ff5dff 142px,#ff2db6 182px,#ff017c 236px,#ff004a 310px,#ff001f 410px)"></div>
<div class="a" style="left:1270px;top:534px;width:410px;height:3px;background:linear-gradient(90deg,#008cff 0px,#0380ff 42px,#5677ff 70px,#ff56ff 142px,#ff2aba 180px,#ff0182 230px,#ff004e 306px,#ff0020 410px)"></div>
<div class="a" style="left:1270px;top:537px;width:410px;height:3px;background:linear-gradient(90deg,#0088ff 0px,#017cff 40px,#5872ff 70px,#fe50ff 142px,#ff26be 178px,#ff0189 224px,#ff0051 302px,#ff0021 410px)"></div>
<div class="a" style="left:1270px;top:540px;width:410px;height:3px;background:linear-gradient(90deg,#0083ff 0px,#0477ff 40px,#556eff 68px,#fe4aff 142px,#ff23c1 176px,#ff018f 218px,#ff0055 298px,#ff0023 410px)"></div>
<div class="a" style="left:1270px;top:543px;width:410px;height:3px;background:linear-gradient(90deg,#007fff 0px,#0273ff 38px,#5b68ff 70px,#ff41fc 144px,#ff23cb 170px,#ff05a1 202px,#ff007d 240px,#ff004e 312px,#ff0024 410px)"></div>
<div class="a" style="left:1270px;top:546px;width:410px;height:3px;background:linear-gradient(90deg,#007bff 0px,#0070ff 36px,#5d63ff 70px,#ff3bfc 144px,#ff1fcf 168px,#ff04a9 196px,#ff007e 240px,#ff004f 312px,#ff0025 410px)"></div>
<div class="a" style="left:1270px;top:549px;width:410px;height:3px;background:linear-gradient(90deg,#0077ff 0px,#026bff 36px,#5a5fff 68px,#ff34fd 144px,#ff1bd3 166px,#ff02af 192px,#ff007f 240px,#ff0051 312px,#ff0026 410px)"></div>
<div class="a" style="left:1270px;top:552px;width:410px;height:3px;background:linear-gradient(90deg,#0072ff 0px,#0067ff 34px,#5c5aff 68px,#ff2efd 144px,#ff02b7 186px,#ff0080 240px,#ff0052 312px,#ff0027 410px)"></div>
<div class="a" style="left:1270px;top:555px;width:410px;height:3px;background:linear-gradient(90deg,#006eff 0px,#0263ff 34px,#5956ff 66px,#ff27fe 144px,#ff02c0 180px,#ff0081 240px,#ff0053 312px,#ff0029 410px)"></div>
<div class="a" style="left:1270px;top:558px;width:410px;height:3px;background:linear-gradient(90deg,#006aff 0px,#015fff 32px,#5a51ff 66px,#ff20fe 144px,#ff00c6 176px,#ff00a2 206px,#ff0081 242px,#ff0053 314px,#ff002a 410px)"></div>
<div class="a" style="left:1270px;top:561px;width:410px;height:3px;background:linear-gradient(90deg,#0066ff 0px,#025aff 32px,#574dff 64px,#ff19fe 144px,#ff00d0 170px,#ff00a7 202px,#ff0082 242px,#ff0054 314px,#ff002b 410px)"></div>
<div class="a" style="left:1270px;top:564px;width:410px;height:3px;background:linear-gradient(90deg,#0062ff 0px,#0157ff 30px,#5449ff 62px,#b52fff 108px,#ff11ff 144px,#ff01e1 160px,#ff00bb 186px,#ff0083 242px,#ff0055 314px,#ff002c 410px)"></div>
<div class="a" style="left:1270px;top:567px;width:410px;height:3px;background:linear-gradient(90deg,#005eff 0px,#0352ff 30px,#5644ff 62px,#b927ff 110px,#ff09ff 144px,#ff00e8 156px,#ff00bb 186px,#ff0084 242px,#ff0056 314px,#ff002d 410px)"></div>
<div class="a" style="left:1270px;top:570px;width:410px;height:3px;background:linear-gradient(90deg,#0059ff 0px,#014fff 28px,#583fff 62px,#b623ff 108px,#fe02ff 144px,#ff00bc 186px,#ff0085 242px,#ff0057 314px,#ff002e 410px)"></div>
<div class="a" style="left:1270px;top:573px;width:410px;height:3px;background:linear-gradient(90deg,#0055ff 0px,#034aff 28px,#553bff 60px,#fe00ff 144px,#ff00bb 188px,#ff0086 242px,#ff0058 314px,#ff002f 410px)"></div>
<div class="a" style="left:1270px;top:576px;width:410px;height:3px;background:linear-gradient(90deg,#0051ff 0px,#0147ff 26px,#5b35ff 62px,#e202ff 130px,#ff00fc 146px,#ff00bb 188px,#ff0085 244px,#ff0058 316px,#ff0031 410px)"></div>
<div class="a" style="left:1270px;top:579px;width:410px;height:3px;background:linear-gradient(90deg,#004dff 0px,#0342ff 26px,#5831ff 60px,#d202ff 122px,#ff00fd 146px,#ff00bc 188px,#ff0086 244px,#ff0059 316px,#ff0032 410px)"></div>
<div class="a" style="left:1270px;top:582px;width:410px;height:3px;background:linear-gradient(90deg,#0049ff 0px,#023fff 24px,#4d2fff 54px,#c702ff 116px,#ff00fd 146px,#ff00bd 188px,#ff0087 244px,#ff005a 316px,#ff0033 410px)"></div>
<div class="a" style="left:1270px;top:585px;width:410px;height:3px;background:linear-gradient(90deg,#0045ff 0px,#043aff 24px,#4a2bff 52px,#b802ff 108px,#ff00fe 146px,#ff00be 188px,#ff0088 244px,#ff005b 316px,#ff0034 410px)"></div>
<div class="a" style="left:1270px;top:588px;width:410px;height:3px;background:linear-gradient(90deg,#0041ff 0px,#0237ff 22px,#4828ff 50px,#ad01ff 102px,#ff00fe 146px,#ff00be 188px,#ff0089 244px,#ff005c 316px,#ff0035 410px)"></div>
<div class="a" style="left:1270px;top:591px;width:410px;height:3px;background:linear-gradient(90deg,#003cff 0px,#0432ff 22px,#4524ff 48px,#a201ff 96px,#ff00fe 146px,#ff00bd 190px,#ff0088 246px,#ff005c 318px,#ff0036 410px)"></div>
<div class="a" style="left:1270px;top:594px;width:410px;height:3px;background:linear-gradient(90deg,#0038ff 0px,#022fff 20px,#3e21ff 44px,#9401ff 88px,#ff00ff 146px,#ff00bd 190px,#ff0089 246px,#ff005d 318px,#ff0037 410px)"></div>
<div class="a" style="left:1270px;top:597px;width:410px;height:3px;background:linear-gradient(90deg,#0034ff 0px,#042aff 20px,#3c1dff 42px,#8a01ff 82px,#ff00ff 146px,#ff00be 190px,#ff008a 246px,#ff005e 318px,#ff0038 410px)"></div>
<div class="a" style="left:1270px;top:600px;width:410px;height:3px;background:linear-gradient(90deg,#0030ff 0px,#0226ff 18px,#3919ff 40px,#7c01ff 74px,#ff00ff 146px,#ff00bf 190px,#ff008b 246px,#ff005f 318px,#ff0039 410px)"></div>
<div class="a" style="left:1270px;top:603px;width:410px;height:3px;background:linear-gradient(90deg,#002bff 0px,#0123ff 16px,#3715ff 38px,#7201ff 68px,#fe00ff 146px,#ff00c0 190px,#ff008c 246px,#ff0060 318px,#ff003a 410px)"></div>
<div class="a" style="left:1270px;top:606px;width:410px;height:3px;background:linear-gradient(90deg,#0027ff 0px,#031eff 16px,#3012ff 34px,#6800ff 62px,#fe00ff 146px,#ff00c0 190px,#ff008d 246px,#ff0061 318px,#ff003b 410px)"></div>
<div class="a" style="left:1270px;top:609px;width:410px;height:3px;background:linear-gradient(90deg,#0022ff 0px,#011aff 14px,#5a00ff 54px,#ff00fd 148px,#ff00bf 192px,#ff008c 248px,#ff0061 320px,#ff003c 410px)"></div>
<div class="a" style="left:1270px;top:612px;width:410px;height:3px;background:linear-gradient(90deg,#001eff 0px,#0315ff 14px,#5000ff 48px,#ff00fd 148px,#ff00bf 192px,#ff008d 248px,#ff0062 320px,#ff003d 410px)"></div>
<div class="a" style="left:1270px;top:615px;width:410px;height:3px;background:linear-gradient(90deg,#0019ff 0px,#0111ff 12px,#4600ff 42px,#ff00fd 148px,#ff00c0 192px,#ff008e 248px,#ff0063 320px,#ff003d 410px)"></div>
<div class="a" style="left:1270px;top:618px;width:410px;height:3px;background:linear-gradient(90deg,#0014ff 0px,#030cff 12px,#2f01ff 30px,#5700ff 50px,#ff00fe 148px,#ff00c1 192px,#ff008e 248px,#ff0063 320px,#ff003e 410px)"></div>
<div class="a" style="left:1270px;top:621px;width:410px;height:3px;background:linear-gradient(90deg,#000fff 0px,#0208ff 10px,#5800ff 50px,#ff00fe 148px,#ff00c1 192px,#ff008f 248px,#ff0064 320px,#ff003f 410px)"></div>
<div class="a" style="left:1270px;top:624px;width:410px;height:3px;background:linear-gradient(90deg,#0009ff 0px,#0303ff 10px,#5500ff 48px,#ff00fe 148px,#ff00c2 192px,#ff0090 248px,#ff0065 320px,#ff0040 410px)"></div>
<div class="a" style="left:1270px;top:627px;width:410px;height:3px;background:linear-gradient(90deg,#0005ff 0px,#0201ff 8px,#5700ff 48px,#ff00ff 148px,#ff00c3 192px,#ff0091 248px,#ff0066 320px,#ff0041 410px)"></div>
<div class="a" style="left:1270px;top:630px;width:410px;height:3px;background:linear-gradient(90deg,#0001ff 0px,#0400ff 8px,#5400ff 46px,#ff00ff 148px,#ff00c3 192px,#ff0092 248px,#ff0067 320px,#ff0042 410px)"></div>
<div class="a" style="left:1270px;top:633px;width:410px;height:3px;background:linear-gradient(90deg,#0000ff 0px,#0200ff 6px,#5600ff 46px,#ff00ff 148px,#ff00c2 194px,#ff0091 250px,#ff0068 320px,#ff0043 410px)"></div>
</div>
<div class="a" style="left:0;top:0;width:1920px;height:1039px;clip-path:polygon(1602px 155px,1833px 155px,1833px 350px,1602px 350px)">
<div class="a" style="left:1602px;top:155px;width:231px;height:6px;background:linear-gradient(90deg,#5f9900 0px,#999900 182px,#998900 230px)"></div>
<div class="a" style="left:1602px;top:161px;width:231px;height:6px;background:linear-gradient(90deg,#609900 0px,#999900 178px,#998800 230px)"></div>
<div class="a" style="left:1602px;top:167px;width:231px;height:6px;background:linear-gradient(90deg,#619900 0px,#989900 172px,#998700 230px)"></div>
<div class="a" style="left:1602px;top:173px;width:231px;height:6px;background:linear-gradient(90deg,#639900 0px,#999900 168px,#998500 230px)"></div>
<div class="a" style="left:1602px;top:179px;width:231px;height:6px;background:linear-gradient(90deg,#649900 0px,#999900 164px,#998400 230px)"></div>
<div class="a" style="left:1602px;top:185px;width:231px;height:6px;background:linear-gradient(90deg,#659900 0px,#999900 160px,#998300 230px)"></div>
<div class="a" style="left:1602px;top:191px;width:231px;height:6px;background:linear-gradient(90deg,#669900 0px,#999900 156px,#998100 230px)"></div>
<div class="a" style="left:1602px;top:197px;width:231px;height:6px;background:linear-gradient(90deg,#679900 0px,#999900 152px,#998000 230px)"></div>
<div class="a" style="left:1602px;top:203px;width:231px;height:6px;background:linear-gradient(90deg,#689900 0px,#999900 148px,#997f00 230px)"></div>
<div class="a" style="left:1602px;top:209px;width:231px;height:6px;background:linear-gradient(90deg,#699900 0px,#999900 142px,#997d00 230px)"></div>
<div class="a" style="left:1602px;top:215px;width:231px;height:6px;background:linear-gradient(90deg,#6b9900 0px,#999900 138px,#997c00 230px)"></div>
<div class="a" style="left:1602px;top:221px;width:231px;height:6px;background:linear-gradient(90deg,#6c9900 0px,#999900 134px,#997b00 230px)"></div>
<div class="a" style="left:1602px;top:227px;width:231px;height:6px;background:linear-gradient(90deg,#6d9900 0px,#999900 130px,#997a00 230px)"></div>
<div class="a" style="left:1602px;top:233px;width:231px;height:6px;background:linear-gradient(90deg,#6e9900 0px,#999900 126px,#997800 230px)"></div>
<div class="a" style="left:1602px;top:239px;width:231px;height:6px;background:linear-gradient(90deg,#709900 0px,#999900 122px,#997700 230px)"></div>
<div class="a" style="left:1602px;top:245px;width:231px;height:6px;background:linear-gradient(90deg,#719900 0px,#999900 116px,#997600 230px)"></div>
<div class="a" style="left:1602px;top:251px;width:231px;height:6px;background:linear-gradient(90deg,#729900 0px,#999900 112px,#997500 230px)"></div>
<div class="a" style="left:1602px;top:257px;width:231px;height:6px;background:linear-gradient(90deg,#739900 0px,#999900 108px,#997300 230px)"></div>
<div class="a" style="left:1602px;top:263px;width:231px;height:6px;background:linear-gradient(90deg,#759900 0px,#999900 104px,#997200 230px)"></div>
<div class="a" style="left:1602px;top:269px;width:231px;height:6px;background:linear-gradient(90deg,#769900 0px,#999900 100px,#997100 230px)"></div>
<div class="a" style="left:1602px;top:275px;width:231px;height:6px;background:linear-gradient(90deg,#779900 0px,#999900 94px,#997000 230px)"></div>
<div class="a" style="left:1602px;top:281px;width:231px;height:6px;background:linear-gradient(90deg,#799900 0px,#999900 90px,#996e00 230px)"></div>
<div class="a" style="left:1602px;top:287px;width:231px;height:6px;background:linear-gradient(90deg,#7a9901 0px,#999900 86px,#996d00 230px)"></div>
<div class="a" style="left:1602px;top:293px;width:231px;height:6px;background:linear-gradient(90deg,#7c9901 0px,#999900 82px,#996c00 230px)"></div>
<div class="a" style="left:1602px;top:299px;width:231px;height:6px;background:linear-gradient(90deg,#7d9901 0px,#999900 78px,#996b00 230px)"></div>
<div class="a" style="left:1602px;top:305px;width:231px;height:6px;background:linear-gradient(90deg,#7e9901 0px,#999900 74px,#996a00 230px)"></div>
<div class="a" style="left:1602px;top:311px;width:231px;height:6px;background:linear-gradient(90deg,#809901 0px,#999900 68px,#996900 230px)"></div>
<div class="a" style="left:1602px;top:317px;width:231px;height:6px;background:linear-gradient(90deg,#819901 0px,#999900 64px,#996700 230px)"></div>
<div class="a" style="left:1602px;top:323px;width:231px;height:6px;background:linear-gradient(90deg,#839901 0px,#999901 60px,#996600 230px)"></div>
<div class="a" style="left:1602px;top:329px;width:231px;height:6px;background:linear-gradient(90deg,#849902 0px,#999901 56px,#996500 230px)"></div>
<div class="a" style="left:1602px;top:335px;width:231px;height:6px;background:linear-gradient(90deg,#869902 0px,#999901 52px,#996400 230px)"></div>
<div class="a" style="left:1602px;top:341px;width:231px;height:6px;background:linear-gradient(90deg,#879902 0px,#999801 48px,#996300 230px)"></div>
<div class="a" style="left:1602px;top:347px;width:231px;height:3px;background:linear-gradient(90deg,#889902 0px,#999901 44px,#996200 230px)"></div>
<div class="a" style="left:0;top:0;width:1920px;height:1039px;clip-path:polygon(1602px 176.4px,1833px 328.5px,1833px 350px,1602px 350px)">
<div class="a" style="left:1602px;top:155px;width:231px;height:6px;background:linear-gradient(90deg,#c3ff00 0px,#ffff00 182px,#fff000 230px)"></div>
<div class="a" style="left:1602px;top:161px;width:231px;height:6px;background:linear-gradient(90deg,#c5ff00 0px,#ffff00 178px,#ffef00 230px)"></div>
<div class="a" style="left:1602px;top:167px;width:231px;height:6px;background:linear-gradient(90deg,#c6ff00 0px,#ffff00 174px,#ffed00 230px)"></div>
<div class="a" style="left:1602px;top:173px;width:231px;height:6px;background:linear-gradient(90deg,#c7ff00 0px,#ffff00 168px,#ffec00 230px)"></div>
<div class="a" style="left:1602px;top:179px;width:231px;height:6px;background:linear-gradient(90deg,#c8ff00 0px,#ffff00 164px,#ffeb00 230px)"></div>
<div class="a" style="left:1602px;top:185px;width:231px;height:6px;background:linear-gradient(90deg,#caff01 0px,#ffff00 160px,#ffe900 230px)"></div>
<div class="a" style="left:1602px;top:191px;width:231px;height:6px;background:linear-gradient(90deg,#cbff01 0px,#ffff00 156px,#ffe800 230px)"></div>
<div class="a" style="left:1602px;top:197px;width:231px;height:6px;background:linear-gradient(90deg,#ccff02 0px,#ffff00 152px,#ffe700 230px)"></div>
<div class="a" style="left:1602px;top:203px;width:231px;height:6px;background:linear-gradient(90deg,#cdff03 0px,#ffff00 146px,#ffe500 230px)"></div>
<div class="a" style="left:1602px;top:209px;width:231px;height:6px;background:linear-gradient(90deg,#cfff04 0px,#ffff00 142px,#ffe400 230px)"></div>
<div class="a" style="left:1602px;top:215px;width:231px;height:6px;background:linear-gradient(90deg,#d0ff05 0px,#ffff00 138px,#ffe300 230px)"></div>
<div class="a" style="left:1602px;top:221px;width:231px;height:6px;background:linear-gradient(90deg,#d1ff07 0px,#ffff00 134px,#ffe100 230px)"></div>
<div class="a" style="left:1602px;top:227px;width:231px;height:6px;background:linear-gradient(90deg,#d3ff08 0px,#ffff00 130px,#ffe000 230px)"></div>
<div class="a" style="left:1602px;top:233px;width:231px;height:6px;background:linear-gradient(90deg,#d4ff0a 0px,#ffff00 126px,#ffdf00 230px)"></div>
<div class="a" style="left:1602px;top:239px;width:231px;height:6px;background:linear-gradient(90deg,#d5ff0c 0px,#ffff00 120px,#ffdd00 230px)"></div>
<div class="a" style="left:1602px;top:245px;width:231px;height:6px;background:linear-gradient(90deg,#d7ff0e 0px,#ffff00 116px,#ffdc00 230px)"></div>
<div class="a" style="left:1602px;top:251px;width:231px;height:6px;background:linear-gradient(90deg,#d8ff0f 0px,#ffff00 112px,#ffdb00 230px)"></div>
<div class="a" style="left:1602px;top:257px;width:231px;height:6px;background:linear-gradient(90deg,#d9ff11 0px,#ffff01 108px,#ffd900 230px)"></div>
<div class="a" style="left:1602px;top:263px;width:231px;height:6px;background:linear-gradient(90deg,#dbff13 0px,#ffff02 104px,#ffd800 230px)"></div>
<div class="a" style="left:1602px;top:269px;width:231px;height:6px;background:linear-gradient(90deg,#dcff14 0px,#ffff03 100px,#ffd700 230px)"></div>
<div class="a" style="left:1602px;top:275px;width:231px;height:6px;background:linear-gradient(90deg,#deff16 0px,#ffff06 94px,#ffd500 230px)"></div>
<div class="a" style="left:1602px;top:281px;width:231px;height:6px;background:linear-gradient(90deg,#dfff18 0px,#ffff08 90px,#ffec01 148px,#ffd400 230px)"></div>
<div class="a" style="left:1602px;top:287px;width:231px;height:6px;background:linear-gradient(90deg,#e0ff19 0px,#ffff0b 86px,#ffea01 150px,#ffd300 230px)"></div>
<div class="a" style="left:1602px;top:293px;width:231px;height:6px;background:linear-gradient(90deg,#e2ff1b 0px,#ffff0d 82px,#ffe801 152px,#ffd200 230px)"></div>
<div class="a" style="left:1602px;top:299px;width:231px;height:6px;background:linear-gradient(90deg,#e3ff1d 0px,#ffff10 78px,#ffe602 152px,#ffd000 230px)"></div>
<div class="a" style="left:1602px;top:305px;width:231px;height:6px;background:linear-gradient(90deg,#e5ff1e 0px,#ffff12 74px,#ffe403 154px,#ffcf00 230px)"></div>
<div class="a" style="left:1602px;top:311px;width:231px;height:6px;background:linear-gradient(90deg,#e6ff20 0px,#ffff15 68px,#ffe204 156px,#ffce00 230px)"></div>
<div class="a" style="left:1602px;top:317px;width:231px;height:6px;background:linear-gradient(90deg,#e8ff21 0px,#ffff18 64px,#ffe004 160px,#ffcd00 230px)"></div>
<div class="a" style="left:1602px;top:323px;width:231px;height:6px;background:linear-gradient(90deg,#e9ff23 0px,#ffff1a 60px,#ffde05 162px,#ffcb00 230px)"></div>
<div class="a" style="left:1602px;top:329px;width:231px;height:6px;background:linear-gradient(90deg,#ebff24 0px,#ffff1c 56px,#ffdc06 164px,#ffca00 230px)"></div>
<div class="a" style="left:1602px;top:335px;width:231px;height:6px;background:linear-gradient(90deg,#ecff26 0px,#ffff1e 52px,#ffc900 230px)"></div>
<div class="a" style="left:1602px;top:341px;width:231px;height:6px;background:linear-gradient(90deg,#eeff28 0px,#fffe21 48px,#ffc801 230px)"></div>
<div class="a" style="left:1602px;top:347px;width:231px;height:3px;background:linear-gradient(90deg,#efff29 0px,#ffff23 44px,#ffc701 230px)"></div>
</div></div>
<svg class="a" style="left:0;top:0" width="1920" height="1039" viewBox="0 0 1920 1039" font-family="Liberation Sans, sans-serif">
<path d="M1151 670 L1151 147 L1841 147 L1841 670 Z" fill="none" stroke="#a8a8a8" stroke-width="2"/>
<line x1="1145" y1="669.9" x2="1151" y2="669.9" stroke="#b0b0b0" stroke-width="1.5"/>
<text x="1143.0" y="675.4" font-size="15" fill="#dcdcdc" text-anchor="end" >0</text>
<line x1="1151.3" y1="670" x2="1151.3" y2="676" stroke="#b0b0b0" stroke-width="1.5"/>
<text x="1151.3" y="693.0" font-size="15" fill="#dcdcdc" text-anchor="middle" >0</text>
<line x1="1145" y1="607.6" x2="1151" y2="607.6" stroke="#b0b0b0" stroke-width="1.5"/>
<text x="1143.0" y="613.1" font-size="15" fill="#dcdcdc" text-anchor="end" >0,1</text>
<line x1="1233.3" y1="670" x2="1233.3" y2="676" stroke="#b0b0b0" stroke-width="1.5"/>
<text x="1233.3" y="693.0" font-size="15" fill="#dcdcdc" text-anchor="middle" >0,1</text>
<line x1="1145" y1="545.4" x2="1151" y2="545.4" stroke="#b0b0b0" stroke-width="1.5"/>
<text x="1143.0" y="550.9" font-size="15" fill="#dcdcdc" text-anchor="end" >0,2</text>
<line x1="1315.3" y1="670" x2="1315.3" y2="676" stroke="#b0b0b0" stroke-width="1.5"/>
<text x="1315.3" y="693.0" font-size="15" fill="#dcdcdc" text-anchor="middle" >0,2</text>
<line x1="1145" y1="483.1" x2="1151" y2="483.1" stroke="#b0b0b0" stroke-width="1.5"/>
<text x="1143.0" y="488.6" font-size="15" fill="#dcdcdc" text-anchor="end" >0,3</text>
<line x1="1397.3" y1="670" x2="1397.3" y2="676" stroke="#b0b0b0" stroke-width="1.5"/>
<text x="1397.3" y="693.0" font-size="15" fill="#dcdcdc" text-anchor="middle" >0,3</text>
<line x1="1145" y1="420.8" x2="1151" y2="420.8" stroke="#b0b0b0" stroke-width="1.5"/>
<text x="1143.0" y="426.3" font-size="15" fill="#dcdcdc" text-anchor="end" >0,4</text>
<line x1="1479.3" y1="670" x2="1479.3" y2="676" stroke="#b0b0b0" stroke-width="1.5"/>
<text x="1479.3" y="693.0" font-size="15" fill="#dcdcdc" text-anchor="middle" >0,4</text>
<line x1="1145" y1="358.5" x2="1151" y2="358.5" stroke="#b0b0b0" stroke-width="1.5"/>
<text x="1143.0" y="364.0" font-size="15" fill="#dcdcdc" text-anchor="end" >0,5</text>
<line x1="1561.3" y1="670" x2="1561.3" y2="676" stroke="#b0b0b0" stroke-width="1.5"/>
<text x="1561.3" y="693.0" font-size="15" fill="#dcdcdc" text-anchor="middle" >0,5</text>
<line x1="1145" y1="296.3" x2="1151" y2="296.3" stroke="#b0b0b0" stroke-width="1.5"/>
<text x="1143.0" y="301.8" font-size="15" fill="#dcdcdc" text-anchor="end" >0,6</text>
<line x1="1643.3" y1="670" x2="1643.3" y2="676" stroke="#b0b0b0" stroke-width="1.5"/>
<text x="1643.3" y="693.0" font-size="15" fill="#dcdcdc" text-anchor="middle" >0,6</text>
<line x1="1145" y1="234.0" x2="1151" y2="234.0" stroke="#b0b0b0" stroke-width="1.5"/>
<text x="1143.0" y="239.5" font-size="15" fill="#dcdcdc" text-anchor="end" >0,7</text>
<line x1="1725.3" y1="670" x2="1725.3" y2="676" stroke="#b0b0b0" stroke-width="1.5"/>
<text x="1725.3" y="693.0" font-size="15" fill="#dcdcdc" text-anchor="middle" >0,7</text>
<line x1="1145" y1="171.7" x2="1151" y2="171.7" stroke="#b0b0b0" stroke-width="1.5"/>
<text x="1143.0" y="177.2" font-size="15" fill="#dcdcdc" text-anchor="end" >0,8</text>
<line x1="1807.3" y1="670" x2="1807.3" y2="676" stroke="#b0b0b0" stroke-width="1.5"/>
<text x="1807.3" y="693.0" font-size="15" fill="#dcdcdc" text-anchor="middle" >0,8</text>
<text x="1482.0" y="141.5" font-size="15" fill="#dedede" text-anchor="middle" >CIE 1931 xy</text>
<rect x="1601" y="154" width="233" height="197" fill="none" stroke="#a0a0a0" stroke-width="2"/>
<rect x="1708.5" y="243.7" width="15" height="15" fill="none" stroke="#f4f4f4" stroke-width="2"/>
<circle cx="1710" cy="326.7" r="4.6" fill="#a8a840" stroke="#202020" stroke-width="1.5"/>
<rect x="1388.1" y="288.9" width="14.6" height="14.6" fill="#fff" fill-opacity="0.1" stroke="#f4f4f4" stroke-width="2.2"/>
<rect x="1391.1" y="324.7" width="14.6" height="14.6" fill="#fff" fill-opacity="0.1" stroke="#f4f4f4" stroke-width="2.2"/>
<rect x="1393.3" y="358.2" width="14.6" height="14.6" fill="#fff" fill-opacity="0.1" stroke="#f4f4f4" stroke-width="2.2"/>
<rect x="1395.2" y="389.9" width="14.6" height="14.6" fill="#fff" fill-opacity="0.1" stroke="#f4f4f4" stroke-width="2.2"/>
<rect x="1397.1" y="422.8" width="14.6" height="14.6" fill="#fff" fill-opacity="0.1" stroke="#f4f4f4" stroke-width="2.2"/>
<rect x="1486.8" y="347.0" width="14.6" height="14.6" fill="#fff" fill-opacity="0.1" stroke="#f4f4f4" stroke-width="2.2"/>
<rect x="1467.4" y="371.7" width="14.6" height="14.6" fill="#fff" fill-opacity="0.1" stroke="#f4f4f4" stroke-width="2.2"/>
<rect x="1451.6" y="391.7" width="14.6" height="14.6" fill="#fff" fill-opacity="0.1" stroke="#f4f4f4" stroke-width="2.2"/>
<rect x="1435.1" y="411.6" width="14.6" height="14.6" fill="#fff" fill-opacity="0.1" stroke="#f4f4f4" stroke-width="2.2"/>
<rect x="1416.9" y="435.1" width="14.6" height="14.6" fill="#fff" fill-opacity="0.1" stroke="#f4f4f4" stroke-width="2.2"/>
<rect x="1667.7" y="456.3" width="14.6" height="14.6" fill="#fff" fill-opacity="0.1" stroke="#f4f4f4" stroke-width="2.2"/>
<rect x="1608.4" y="456.3" width="14.6" height="14.6" fill="#fff" fill-opacity="0.1" stroke="#f4f4f4" stroke-width="2.2"/>
<rect x="1556.7" y="456.3" width="14.6" height="14.6" fill="#fff" fill-opacity="0.1" stroke="#f4f4f4" stroke-width="2.2"/>
<rect x="1507.4" y="456.3" width="14.6" height="14.6" fill="#fff" fill-opacity="0.1" stroke="#f4f4f4" stroke-width="2.2"/>
<rect x="1452.1" y="456.3" width="14.6" height="14.6" fill="#fff" fill-opacity="0.1" stroke="#f4f4f4" stroke-width="2.2"/>
<rect x="1327.2" y="457.9" width="14.6" height="14.6" fill="#fff" fill-opacity="0.1" stroke="#f4f4f4" stroke-width="2.2"/>
<rect x="1342.7" y="457.9" width="14.6" height="14.6" fill="#fff" fill-opacity="0.1" stroke="#f4f4f4" stroke-width="2.2"/>
<rect x="1357.7" y="457.9" width="14.6" height="14.6" fill="#fff" fill-opacity="0.1" stroke="#f4f4f4" stroke-width="2.2"/>
<rect x="1371.7" y="457.9" width="14.6" height="14.6" fill="#fff" fill-opacity="0.1" stroke="#f4f4f4" stroke-width="2.2"/>
<rect x="1385.7" y="457.9" width="14.6" height="14.6" fill="#fff" fill-opacity="0.1" stroke="#f4f4f4" stroke-width="2.2"/>
<rect x="1264.8" y="624.3" width="14.6" height="14.6" fill="#fff" fill-opacity="0.1" stroke="#f4f4f4" stroke-width="2.2"/>
<rect x="1294.2" y="587.8" width="14.6" height="14.6" fill="#fff" fill-opacity="0.1" stroke="#f4f4f4" stroke-width="2.2"/>
<rect x="1320.6" y="555.5" width="14.6" height="14.6" fill="#fff" fill-opacity="0.1" stroke="#f4f4f4" stroke-width="2.2"/>
<rect x="1345.8" y="524.4" width="14.6" height="14.6" fill="#fff" fill-opacity="0.1" stroke="#f4f4f4" stroke-width="2.2"/>
<rect x="1372.9" y="490.9" width="14.6" height="14.6" fill="#fff" fill-opacity="0.1" stroke="#f4f4f4" stroke-width="2.2"/>
<rect x="1405.7" y="566.7" width="14.6" height="14.6" fill="#fff" fill-opacity="0.1" stroke="#f4f4f4" stroke-width="2.2"/>
<rect x="1404.6" y="543.2" width="14.6" height="14.6" fill="#fff" fill-opacity="0.1" stroke="#f4f4f4" stroke-width="2.2"/>
<rect x="1402.8" y="521.5" width="14.6" height="14.6" fill="#fff" fill-opacity="0.1" stroke="#f4f4f4" stroke-width="2.2"/>
<rect x="1402.2" y="502.7" width="14.6" height="14.6" fill="#fff" fill-opacity="0.1" stroke="#f4f4f4" stroke-width="2.2"/>
<rect x="1400.5" y="479.2" width="14.6" height="14.6" fill="#fff" fill-opacity="0.1" stroke="#f4f4f4" stroke-width="2.2"/>
<circle cx="1414.8" cy="319.7" r="4.9" fill="#289628" stroke="#102810" stroke-width="1.5"/>
<circle cx="1410.1" cy="350.8" r="4.9" fill="#58a058" stroke="#102810" stroke-width="1.5"/>
<circle cx="1407.2" cy="382.5" r="4.9" fill="#71a571" stroke="#102810" stroke-width="1.5"/>
<circle cx="1404.2" cy="413.1" r="4.9" fill="#85a985" stroke="#102810" stroke-width="1.5"/>
<circle cx="1401.3" cy="438.9" r="4.9" fill="#96ac96" stroke="#102810" stroke-width="1.5"/>
<circle cx="1492.9" cy="366.7" r="4.9" fill="#aaaa28" stroke="#282810" stroke-width="1.5"/>
<circle cx="1473.5" cy="386.6" r="4.9" fill="#acac58" stroke="#282810" stroke-width="1.5"/>
<circle cx="1453.6" cy="409.0" r="4.9" fill="#adad71" stroke="#282810" stroke-width="1.5"/>
<circle cx="1435.9" cy="427.2" r="4.9" fill="#aeae85" stroke="#282810" stroke-width="1.5"/>
<circle cx="1417.2" cy="447.7" r="4.9" fill="#afaf96" stroke="#282810" stroke-width="1.5"/>
<circle cx="1629.2" cy="449.5" r="4.9" fill="#aa1919" stroke="#301010" stroke-width="1.5"/>
<circle cx="1585.1" cy="451.8" r="4.9" fill="#ac4d4d" stroke="#301010" stroke-width="1.5"/>
<circle cx="1539.3" cy="456.5" r="4.9" fill="#ad6868" stroke="#301010" stroke-width="1.5"/>
<circle cx="1491.2" cy="460.6" r="4.9" fill="#ae7e7e" stroke="#301010" stroke-width="1.5"/>
<circle cx="1443.6" cy="465.3" r="4.9" fill="#af9191" stroke="#301010" stroke-width="1.5"/>
<circle cx="1338.1" cy="475.4" r="4.9" fill="#32a5a0" stroke="#102828" stroke-width="1.5"/>
<circle cx="1349.7" cy="473.4" r="4.9" fill="#62a9a5" stroke="#102828" stroke-width="1.5"/>
<circle cx="1362.4" cy="471.7" r="4.9" fill="#7baca8" stroke="#102828" stroke-width="1.5"/>
<circle cx="1374.4" cy="470.8" r="4.9" fill="#8fadaa" stroke="#102828" stroke-width="1.5"/>
<circle cx="1385.8" cy="470.8" r="4.9" fill="#a0afac" stroke="#102828" stroke-width="1.5"/>
<circle cx="1276.2" cy="599.2" r="4.9" fill="#1919a0" stroke="#101030" stroke-width="1.5"/>
<circle cx="1298.5" cy="578.1" r="4.9" fill="#5454ab" stroke="#101030" stroke-width="1.5"/>
<circle cx="1322.0" cy="551.7" r="4.9" fill="#7272b0" stroke="#101030" stroke-width="1.5"/>
<circle cx="1346.7" cy="525.8" r="4.9" fill="#8b8bb5" stroke="#101030" stroke-width="1.5"/>
<circle cx="1370.1" cy="499.7" r="4.9" fill="#a0a0b9" stroke="#101030" stroke-width="1.5"/>
<circle cx="1388.4" cy="551.7" r="4.9" fill="#c31ea0" stroke="#301030" stroke-width="1.5"/>
<circle cx="1391.3" cy="537.0" r="4.9" fill="#bc53a8" stroke="#301030" stroke-width="1.5"/>
<circle cx="1392.5" cy="518.2" r="4.9" fill="#b86eac" stroke="#301030" stroke-width="1.5"/>
<circle cx="1393.7" cy="505.3" r="4.9" fill="#b585af" stroke="#301030" stroke-width="1.5"/>
<circle cx="1395.9" cy="488.2" r="4.9" fill="#b298b2" stroke="#301030" stroke-width="1.5"/>
<circle cx="1397.6" cy="470.8" r="4.9" fill="#f4f4f4" stroke="#202020" stroke-width="1.5"/>
<rect x="1400.2" y="457.9" width="14.6" height="14.6" fill="#fff" fill-opacity="0.1" stroke="#101010" stroke-width="2.2"/>
</svg><div id="leftedge" class="a" style="left:0;top:100px;width:1px;height:869px;background:#262626"></div>
<div class="a" style="left:0;top:969px;width:1920px;height:70px;background:linear-gradient(#474747,#3a3a3a 40%,#262626)"></div>
<div class="a" style="left:52px;top:969px;width:7px;height:70px;background:#2a2a2a"></div>
<!-- left column -->
<div class="a" style="left:1px;top:969px;width:51px;height:69px;border-radius:5px;background:linear-gradient(#a0a0a0,#868686 40%,#6e6e6e 80%,#5a5a5a)"></div>
<div class="a" style="left:18px;top:971px;width:18px;height:18px;border-radius:50%;background:radial-gradient(circle at 50% 30%,#7a7a7a,#8e8e8e 70%,#9a9a9a)"></div>
<div class="a" style="left:22px;top:975px;border-left:5px solid transparent;border-right:5px solid transparent;border-bottom:6px solid #222"></div>
<div class="a" style="left:7px;top:998px;width:40px;height:35px;border-radius:5px;background:#ffff00;border:1px solid #b8b800"></div>
<div class="a" style="left:59px;top:969px;width:169px;height:69px;border-radius:5px;background:linear-gradient(#a9a9a9,#8c8c8c 45%,#6a6a6a 80%,#5c5c5c)"></div>
<div class="a" style="left:65px;top:975px;width:157px;height:41px;border-radius:4px;background:#c0c1a0;border:1px solid #868770;box-shadow:inset 0 1px 1px rgba(0,0,0,0.15)"></div>
<div class="a nw" style="left:59px;top:1022px;width:169px;text-align:center;font-size:11.5px;font-weight:bold;color:#252525">20%</div>
<div class="a" style="left:231px;top:969px;width:169px;height:69px;border-radius:5px;background:linear-gradient(#a9a9a9,#8c8c8c 45%,#6a6a6a 80%,#5c5c5c)"></div>
<div class="a" style="left:237px;top:975px;width:157px;height:41px;border-radius:4px;background:#c4c284;border:1px solid #89875c;box-shadow:inset 0 1px 1px rgba(0,0,0,0.15)"></div>
<div class="a nw" style="left:231px;top:1022px;width:169px;text-align:center;font-size:11.5px;font-weight:bold;color:#252525">40%</div>
<div class="a" style="left:402px;top:969px;width:169px;height:69px;border-radius:5px;background:linear-gradient(#a9a9a9,#8c8c8c 45%,#6a6a6a 80%,#5c5c5c)"></div>
<div class="a" style="left:408px;top:975px;width:157px;height:41px;border-radius:4px;background:#c2c16e;border:1px solid #87874d;box-shadow:inset 0 1px 1px rgba(0,0,0,0.15)"></div>
<div class="a nw" style="left:402px;top:1022px;width:169px;text-align:center;font-size:11.5px;font-weight:bold;color:#252525">60%</div>
<div class="a" style="left:574px;top:969px;width:169px;height:69px;border-radius:5px;background:linear-gradient(#a9a9a9,#8c8c8c 45%,#6a6a6a 80%,#5c5c5c)"></div>
<div class="a" style="left:580px;top:975px;width:157px;height:41px;border-radius:4px;background:#c2be4b;border:1px solid #878534;box-shadow:inset 0 1px 1px rgba(0,0,0,0.15)"></div>
<div class="a nw" style="left:574px;top:1022px;width:169px;text-align:center;font-size:11.5px;font-weight:bold;color:#252525">80%</div>
<div class="a" style="left:746px;top:969px;width:169px;height:69px;border-radius:5px;background:linear-gradient(#1c1c1c,#262626 50%,#2e2e2e)"></div>
<div class="a" style="left:751px;top:974px;width:159px;height:42px;border-radius:4px;background:#c4c000;border:1px solid #8a8800"></div>
<div class="a nw" style="left:746px;top:1022px;width:169px;text-align:center;font-size:11.5px;font-weight:bold;color:#f4f4f4">100%</div>
<!-- right controls -->
<div class="a" style="left:1563px;top:969px;width:54px;height:69px;border-radius:5px;background:linear-gradient(#a8a8a8,#8a8a8a 45%,#7a7a7a 55%,#6a6a6a)"></div>
<div class="a" style="left:1563px;top:989px;width:54px;height:2px;background:#5a5a5a"></div>
<div class="a" style="left:1582px;top:970px;width:17px;height:17px;border-radius:50%;background:radial-gradient(circle at 50% 35%,#7e7e7e,#949494 70%,#a0a0a0)"></div>
<div class="a" style="left:1585px;top:974px;border-left:5.5px solid transparent;border-right:5.5px solid transparent;border-bottom:6px solid #252525"></div>
<div class="a" style="left:1573px;top:996px;width:34px;height:34px;border-radius:5px;border:3px solid #151515;background:linear-gradient(#a8a8a8 50%,#8a8a8a 50%)"></div>
<div class="a" style="left:1583px;top:1006px;width:15px;height:15px;background:linear-gradient(#222 50%,#000 50%)"></div>
<div class="a" style="left:1619px;top:969px;width:256px;height:33px;background:linear-gradient(#b0b0b0,#9a9a9a 40%,#7a7a7a 85%,#6a6a6a)"></div>
<div class="a" style="left:1874px;top:969px;width:46px;height:33px;background:linear-gradient(#2e2e2e,#3a3a3a)"></div>
<div class="a" style="left:1890px;top:975px;width:22px;height:22px;border-radius:50%;background:radial-gradient(circle at 50% 40%,#2a2a2a,#333 80%)"></div>
<div class="a" style="left:1670px;top:969px;width:2px;height:33px;background:#333"></div>
<div class="a" style="left:1721px;top:969px;width:2px;height:33px;background:#333"></div>
<div class="a" style="left:1772px;top:969px;width:2px;height:33px;background:#333"></div>
<div class="a" style="left:1823px;top:969px;width:2px;height:33px;background:#333"></div>
<div class="a" style="left:1619px;top:1002px;width:301px;height:2px;background:#555"></div>
<div class="a" style="left:1619px;top:1004px;width:301px;height:34px;border-radius:5px 0 0 5px;background:linear-gradient(#b4b4b4,#a0a0a0 40%,#8c8c8c 85%,#7a7a7a)"></div>
<div class="a" style="left:1771px;top:1004px;width:2px;height:34px;background:#333"></div>
<div class="a" style="left:0;top:1038px;width:1920px;height:1px;background:#1a1a1a"></div>
<svg class="a" style="left:1619px;top:969px" width="301" height="70" viewBox="1619 969 301 70" font-family="Liberation Sans, sans-serif">
  <defs><radialGradient id="bc" cx="0.5" cy="0.35" r="0.6"><stop offset="0" stop-color="#7c7c7c"/><stop offset="0.75" stop-color="#8c8c8c"/><stop offset="1" stop-color="#a6a6a6"/></radialGradient></defs>
  <circle cx="1644.6" cy="985.7" r="11" fill="url(#bc)"/>
  <rect x="1640" y="981" width="9.5" height="9.5" fill="#2a2a2a"/>
  <circle cx="1696" cy="985.7" r="11" fill="url(#bc)"/>
  <path d="M1692.5 979.5 L1701.5 986 L1692.5 992.5 Z" fill="#2a2a2a"/>
  <circle cx="1747" cy="985.7" r="11" fill="url(#bc)"/>
  <path d="M1743 980.5 h-2.5 v11 h2.5 M1751 980.5 h2.5 v11 h-2.5" fill="none" stroke="#2a2a2a" stroke-width="2"/>
  <circle cx="1745.5" cy="986" r="1" fill="#2a2a2a"/><circle cx="1748.5" cy="986" r="1" fill="#2a2a2a"/>
  <circle cx="1798" cy="985.7" r="11" fill="url(#bc)"/>
  <path d="M1798 985.7 C1795 981.5 1790.5 982.5 1790.5 985.7 C1790.5 989 1795 990 1798 985.7 C1801 981.5 1805.5 982.5 1805.5 985.7 C1805.5 989 1801 990 1798 985.7 Z" fill="none" stroke="#2a2a2a" stroke-width="2"/>
  <circle cx="1849" cy="985.7" r="11" fill="url(#bc)"/>
  <path d="M1843.5 984 A6 6 0 0 1 1854 982.5 M1854.5 987.5 A6 6 0 0 1 1844 989" fill="none" stroke="#2a2a2a" stroke-width="2.2"/>
  <path d="M1851.5 979.5 L1856 983.5 L1851 984.5 Z M1846.5 992 L1842 988 L1847 987 Z" fill="#2a2a2a"/>
  <circle cx="1653.4" cy="1020.7" r="11" fill="url(#bc)"/>
  <path d="M1653 1015.5 L1649 1020.7 L1653 1026 M1657.5 1015.5 L1653.5 1020.7 L1657.5 1026" fill="none" stroke="#2a2a2a" stroke-width="1.6"/>
  <circle cx="1894" cy="1021" r="11" fill="url(#bc)"/>
  <path d="M1890 1015.8 L1894 1021 L1890 1026.2 M1894.5 1015.8 L1898.5 1021 L1894.5 1026.2" fill="none" stroke="#2a2a2a" stroke-width="1.6"/>
  <text x="1684" y="1029.6" font-size="24" fill="#2e2e2e" stroke="#2e2e2e" stroke-width="0.7" textLength="57" lengthAdjust="spacingAndGlyphs">Back</text>
  <text x="1805" y="1029.8" font-size="24" fill="#2e2e2e" stroke="#2e2e2e" stroke-width="0.7" textLength="57.8" lengthAdjust="spacingAndGlyphs">Next</text>
</svg>

</body></html>
